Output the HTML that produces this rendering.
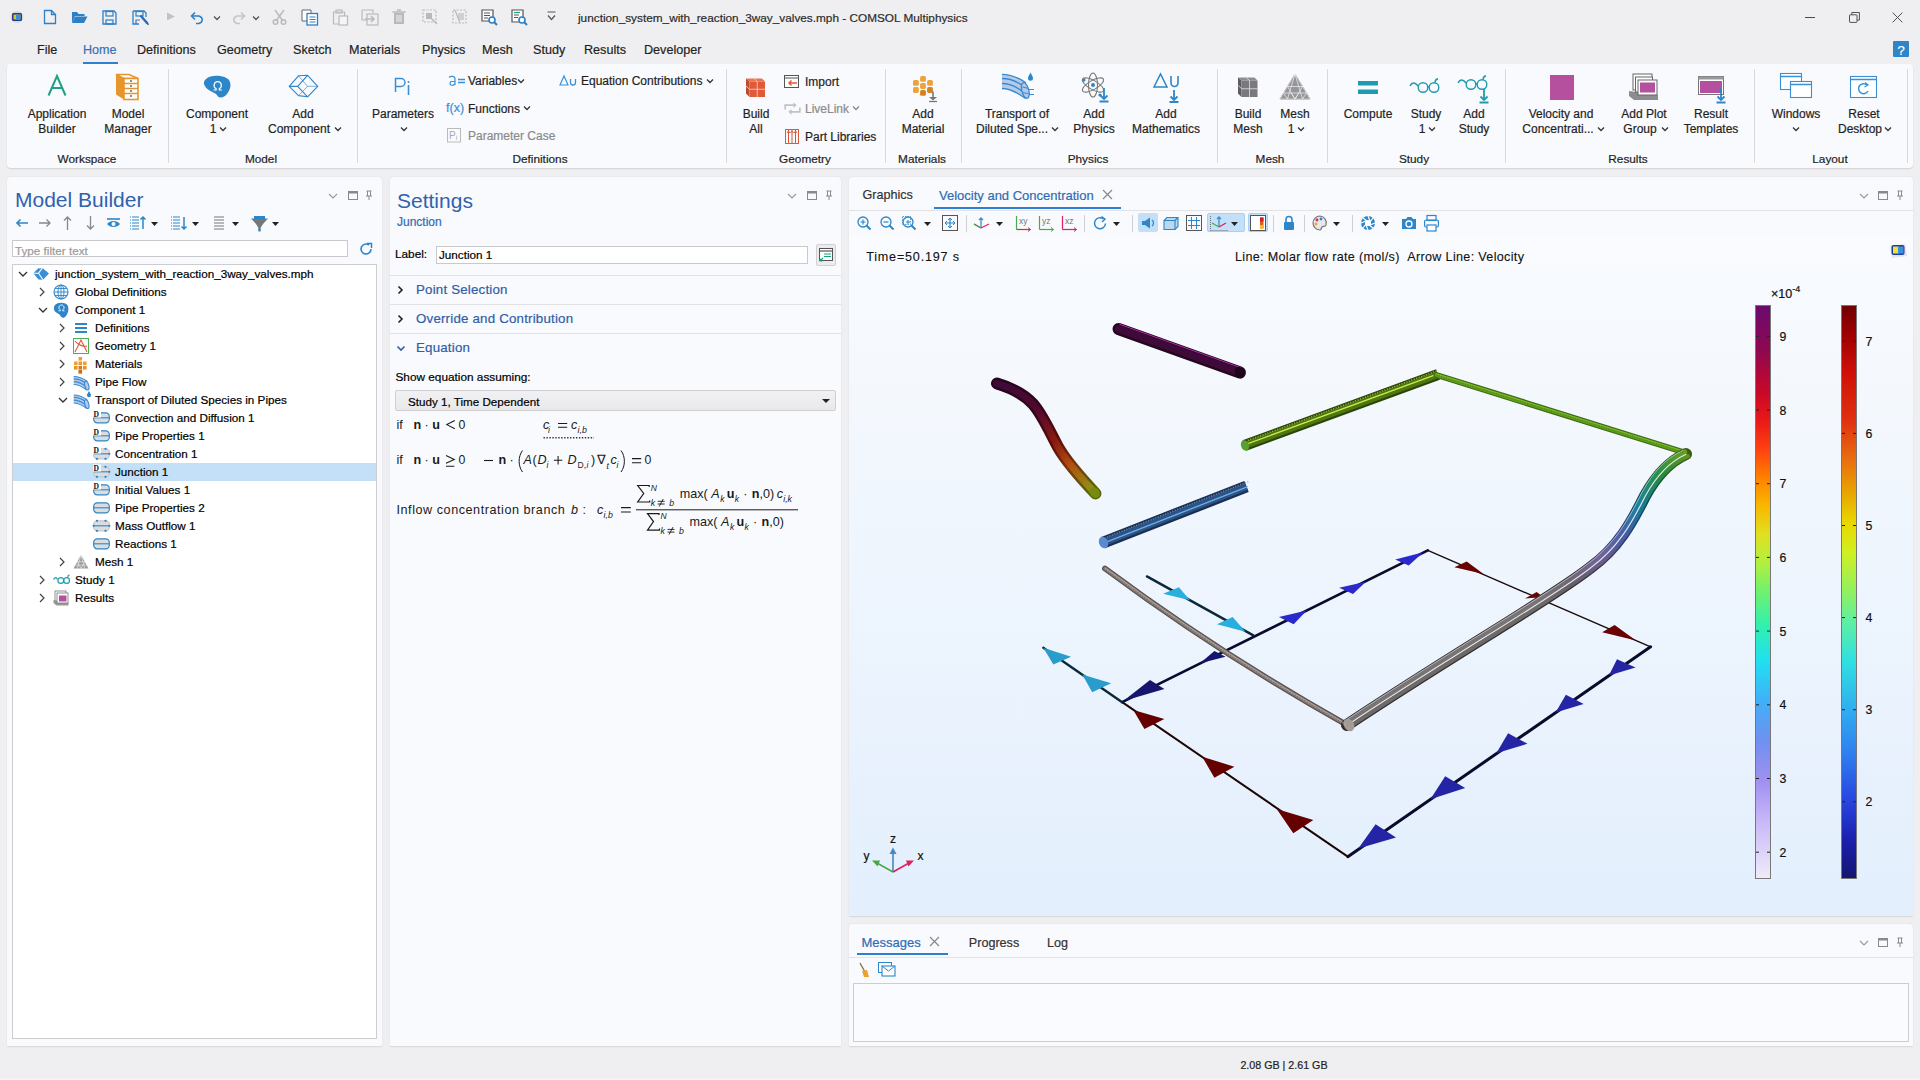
<!DOCTYPE html><html><head><meta charset="utf-8"><style>
html,body{margin:0;padding:0;width:1920px;height:1080px;overflow:hidden;background:#efeff1;font-family:"Liberation Sans", sans-serif;}
.t{position:absolute;white-space:nowrap;line-height:1;-webkit-text-stroke:0.2px currentColor;}
.r{position:absolute;}
svg.r{overflow:visible;}
</style></head><body>
<svg class="r" style="left:10px;top:10px" width="14" height="14" viewBox="0 0 14 14"><ellipse cx="7" cy="7" rx="6.5" ry="6" fill="#d9d9de"/><rect x="2" y="3" width="10" height="8" rx="1.5" fill="#1b3c8f"/><rect x="3.5" y="4.5" width="7" height="5" fill="#e8c21c"/><rect x="6" y="4.5" width="4.5" height="5" fill="#3b8fd9"/></svg><svg class="r" style="left:43px;top:9px" width="14" height="16" viewBox="0 0 14 16"><path d="M1.5 1.5h7l4 4v9h-11z M8.5 1.5v4h4" fill="none" stroke="#2d7fc6" stroke-width="1.3"/></svg><svg class="r" style="left:71px;top:10px" width="17" height="14" viewBox="0 0 17 14"><path d="M1 2h5l1.5 2h6v2H4l-3 7z" fill="#2d7fc6"/><path d="M4 6.5h12.5l-3.5 6.5H1z" fill="#2d7fc6"/></svg><svg class="r" style="left:102px;top:10px" width="15" height="15" viewBox="0 0 15 15"><path d="M1 1h11l2 2v11H1z" fill="none" stroke="#2d7fc6" stroke-width="1.3"/><rect x="4" y="1.5" width="7" height="4.5" fill="none" stroke="#2d7fc6" stroke-width="1.2"/><rect x="4" y="10" width="7" height="4" fill="none" stroke="#2d7fc6" stroke-width="1.2"/></svg><svg class="r" style="left:132px;top:10px" width="17" height="15" viewBox="0 0 17 15"><path d="M1 1h11l2 2v4 M1 1v13h6" fill="none" stroke="#2d7fc6" stroke-width="1.3"/><rect x="4" y="1.5" width="7" height="4.5" fill="none" stroke="#2d7fc6" stroke-width="1.2"/><path d="M4 14v-4h4" fill="none" stroke="#2d7fc6" stroke-width="1.2"/><path d="M8.5 5.5l7 8" stroke="#2a6db5" stroke-width="2.4"/><path d="M15 13l1.5 1.8" stroke="#555" stroke-width="1.5"/></svg><svg class="r" style="left:166px;top:12px" width="10" height="9" viewBox="0 0 10 9"><path d="M1 0.5l8 4-8 4z" fill="#c3c3c6"/></svg><svg class="r" style="left:190px;top:11px" width="16" height="13" viewBox="0 0 16 13"><path d="M5 1.5L1.5 5 5 8.5" fill="none" stroke="#2d7fc6" stroke-width="1.6"/><path d="M2 5h7a5 4 0 0 1 0 7.5H6" fill="none" stroke="#2d7fc6" stroke-width="1.5"/></svg><svg class="r" style="left:213px;top:15px" width="8" height="6" viewBox="0 0 8 6"><path d="M1 1.5l3 3 3-3" fill="none" stroke="#555" stroke-width="1.3"/></svg><svg class="r" style="left:230px;top:11px" width="16" height="13" viewBox="0 0 16 13"><path d="M11 1.5L14.5 5 11 8.5" fill="none" stroke="#c5c5c8" stroke-width="1.6"/><path d="M14 5H7a5 4 0 0 0 0 7.5h3" fill="none" stroke="#c5c5c8" stroke-width="1.5"/></svg><svg class="r" style="left:252px;top:15px" width="8" height="6" viewBox="0 0 8 6"><path d="M1 1.5l3 3 3-3" fill="none" stroke="#555" stroke-width="1.3"/></svg><svg class="r" style="left:272px;top:9px" width="15" height="16" viewBox="0 0 15 16"><path d="M3 1l8 11 M12 1L4 12" stroke="#b9b9bc" stroke-width="1.4" fill="none"/><circle cx="3.5" cy="13" r="2.3" fill="none" stroke="#b9b9bc" stroke-width="1.4"/><circle cx="11.5" cy="13" r="2.3" fill="none" stroke="#b9b9bc" stroke-width="1.4"/></svg><svg class="r" style="left:301px;top:9px" width="18" height="17" viewBox="0 0 18 17"><path d="M1 1h9v11H1z" fill="#fff" stroke="#666" stroke-width="1"/><rect x="6" y="4.5" width="10.5" height="11.5" fill="#fff" stroke="#2d7fc6" stroke-width="1.3"/><path d="M8.5 8h6 M8.5 10.5h6 M8.5 13h6" stroke="#2d7fc6" stroke-width="1.1"/></svg><svg class="r" style="left:332px;top:9px" width="17" height="17" viewBox="0 0 17 17"><path d="M1.5 3h11v12h-11z" fill="none" stroke="#b9b9bc" stroke-width="1.2"/><rect x="4" y="1" width="6" height="3" fill="none" stroke="#b9b9bc" stroke-width="1.2"/><rect x="7" y="7" width="8.5" height="9" fill="#f5f5f7" stroke="#b9b9bc" stroke-width="1.2"/></svg><svg class="r" style="left:361px;top:9px" width="18" height="17" viewBox="0 0 18 17"><path d="M1 1h11v3 M1 1v10h5" fill="none" stroke="#b9b9bc" stroke-width="1.2"/><rect x="6" y="5" width="11" height="11" fill="none" stroke="#b9b9bc" stroke-width="1.2"/><path d="M4 10h9 M10 7l3 3-3 3" fill="none" stroke="#b9b9bc" stroke-width="1.5"/></svg><svg class="r" style="left:392px;top:9px" width="14" height="16" viewBox="0 0 14 16"><path d="M0.5 3h13 M5 1h4" stroke="#b9b9bc" stroke-width="1.5"/><path d="M2 4h10v11H2z" fill="#b9b9bc"/><path d="M5 6v7 M7 6v7 M9 6v7" stroke="#efeff1" stroke-width="1"/></svg><svg class="r" style="left:422px;top:9px" width="17" height="16" viewBox="0 0 17 16"><rect x="1" y="1" width="13" height="12" fill="none" stroke="#b9b9bc" stroke-width="1.2" stroke-dasharray="2 1.5"/><rect x="4" y="4" width="6" height="6" fill="#b9b9bc"/><path d="M8 8l7 7" stroke="#b9b9bc" stroke-width="1.5"/></svg><svg class="r" style="left:452px;top:9px" width="16" height="16" viewBox="0 0 16 16"><rect x="1" y="1" width="13" height="13" fill="none" stroke="#b9b9bc" stroke-width="1.2" stroke-dasharray="2 1.5"/><path d="M3 1l5 13" stroke="#b9b9bc" stroke-width="1.2"/><rect x="6" y="4" width="6" height="7" fill="#b9b9bc" opacity="0.6"/></svg><svg class="r" style="left:481px;top:9px" width="17" height="17" viewBox="0 0 17 17"><path d="M1 1h11v11H1z" fill="#fff" stroke="#555" stroke-width="1.2"/><path d="M3 4h6 M3 6.5h6 M3 9h4" stroke="#555" stroke-width="1"/><circle cx="11" cy="11" r="3" fill="#fff" stroke="#2d7fc6" stroke-width="1.6"/><path d="M13 13l3 3" stroke="#2d7fc6" stroke-width="2"/></svg><svg class="r" style="left:511px;top:9px" width="17" height="17" viewBox="0 0 17 17"><path d="M1 1h11v12H1z" fill="#fff" stroke="#555" stroke-width="1.2"/><path d="M3 3.5h6" stroke="#1aa37a" stroke-width="1.2"/><path d="M3 6h5 M3 8.5h4" stroke="#555" stroke-width="1"/><circle cx="11" cy="11" r="3" fill="#fff" stroke="#2d7fc6" stroke-width="1.6"/><path d="M13 13l3 3" stroke="#2d7fc6" stroke-width="2"/></svg><svg class="r" style="left:547px;top:11px" width="9" height="10" viewBox="0 0 9 10"><path d="M0.5 1h8 M1 4.5l3.5 4 3.5-4" fill="none" stroke="#555" stroke-width="1.2"/></svg><div class="t" style="left:578px;top:12.51px;font-size:11.8px;color:#2b2b2b;font-weight:normal;">junction_system_with_reaction_3way_valves.mph - COMSOL Multiphysics</div><div class="r" style="left:1805px;top:17px;width:10px;height:1px;background:#4a4a4a"></div><svg class="r" style="left:1849px;top:12px" width="11" height="11" viewBox="0 0 11 11"><rect x="0.5" y="2.8" width="7.5" height="7.6" rx="0.6" fill="none" stroke="#4a4a4a" stroke-width="0.95"/><path d="M2.8 2.8V0.5h7.6v7.6H8" fill="none" stroke="#4a4a4a" stroke-width="0.95"/></svg><svg class="r" style="left:1892px;top:12px" width="11" height="11" viewBox="0 0 11 11"><path d="M0.6 0.6l9.8 9.8 M10.4 0.6L0.6 10.4" stroke="#4a4a4a" stroke-width="0.95"/></svg><div class="t" style="left:37px;top:44.13px;font-size:12.6px;color:#1f1f1f;font-weight:normal;">File</div><div class="t" style="left:83px;top:44.13px;font-size:12.6px;color:#3a6fb5;font-weight:normal;">Home</div><div class="t" style="left:137px;top:44.13px;font-size:12.6px;color:#1f1f1f;font-weight:normal;">Definitions</div><div class="t" style="left:217px;top:44.13px;font-size:12.6px;color:#1f1f1f;font-weight:normal;">Geometry</div><div class="t" style="left:293px;top:44.13px;font-size:12.6px;color:#1f1f1f;font-weight:normal;">Sketch</div><div class="t" style="left:349px;top:44.13px;font-size:12.6px;color:#1f1f1f;font-weight:normal;">Materials</div><div class="t" style="left:422px;top:44.13px;font-size:12.6px;color:#1f1f1f;font-weight:normal;">Physics</div><div class="t" style="left:482px;top:44.13px;font-size:12.6px;color:#1f1f1f;font-weight:normal;">Mesh</div><div class="t" style="left:533px;top:44.13px;font-size:12.6px;color:#1f1f1f;font-weight:normal;">Study</div><div class="t" style="left:584px;top:44.13px;font-size:12.6px;color:#1f1f1f;font-weight:normal;">Results</div><div class="t" style="left:644px;top:44.13px;font-size:12.6px;color:#1f1f1f;font-weight:normal;">Developer</div><div class="r" style="left:83px;top:62px;width:35px;height:2px;background:#2f7fd0"></div><div class="r" style="left:1893px;top:41px;width:16px;height:16px;background:#2e86c8;border-radius:1px"></div><div class="t" style="left:1401px;width:1000px;text-align:center;top:43.80px;font-size:13px;color:#fff;font-weight:normal;">?</div><div class="r" style="left:7px;top:64px;width:1906px;height:104px;background:#f9fafd;border-radius:4px;box-shadow:0 1px 1.5px rgba(0,0,0,0.12)"></div><div class="r" style="left:168px;top:69px;width:1px;height:94px;background:#d9d9dc"></div><div class="r" style="left:357px;top:69px;width:1px;height:94px;background:#d9d9dc"></div><div class="r" style="left:726px;top:69px;width:1px;height:94px;background:#d9d9dc"></div><div class="r" style="left:885px;top:69px;width:1px;height:94px;background:#d9d9dc"></div><div class="r" style="left:961px;top:69px;width:1px;height:94px;background:#d9d9dc"></div><div class="r" style="left:1217px;top:69px;width:1px;height:94px;background:#d9d9dc"></div><div class="r" style="left:1327px;top:69px;width:1px;height:94px;background:#d9d9dc"></div><div class="r" style="left:1505px;top:69px;width:1px;height:94px;background:#d9d9dc"></div><div class="r" style="left:1754px;top:69px;width:1px;height:94px;background:#d9d9dc"></div><div class="r" style="left:1907px;top:69px;width:1px;height:94px;background:#d9d9dc"></div><div class="t" style="left:-413px;width:1000px;text-align:center;top:154.41px;font-size:11.8px;color:#1f1f1f;font-weight:normal;">Workspace</div><div class="t" style="left:-239px;width:1000px;text-align:center;top:154.41px;font-size:11.8px;color:#1f1f1f;font-weight:normal;">Model</div><div class="t" style="left:40px;width:1000px;text-align:center;top:154.41px;font-size:11.8px;color:#1f1f1f;font-weight:normal;">Definitions</div><div class="t" style="left:305px;width:1000px;text-align:center;top:154.41px;font-size:11.8px;color:#1f1f1f;font-weight:normal;">Geometry</div><div class="t" style="left:422px;width:1000px;text-align:center;top:154.41px;font-size:11.8px;color:#1f1f1f;font-weight:normal;">Materials</div><div class="t" style="left:588px;width:1000px;text-align:center;top:154.41px;font-size:11.8px;color:#1f1f1f;font-weight:normal;">Physics</div><div class="t" style="left:770px;width:1000px;text-align:center;top:154.41px;font-size:11.8px;color:#1f1f1f;font-weight:normal;">Mesh</div><div class="t" style="left:914px;width:1000px;text-align:center;top:154.41px;font-size:11.8px;color:#1f1f1f;font-weight:normal;">Study</div><div class="t" style="left:1128px;width:1000px;text-align:center;top:154.41px;font-size:11.8px;color:#1f1f1f;font-weight:normal;">Results</div><div class="t" style="left:1330px;width:1000px;text-align:center;top:154.41px;font-size:11.8px;color:#1f1f1f;font-weight:normal;">Layout</div><svg class="r" style="left:47px;top:75px" width="20" height="21" viewBox="0 0 20 21"><path d="M1.5 20.5L10 1 18.5 20.5 M5 13h10" fill="none" stroke="#1ea084" stroke-width="2"/></svg><div class="t" style="left:-443px;width:1000px;text-align:center;top:108.44px;font-size:12.0px;color:#1f1f1f;font-weight:normal;">Application</div><div class="t" style="left:-443px;width:1000px;text-align:center;top:123.34px;font-size:12.0px;color:#1f1f1f;font-weight:normal;">Builder</div><svg class="r" style="left:115px;top:73px" width="24" height="27" viewBox="0 0 24 27"><path d="M1 1.5l8 4v21l-8-5z" fill="#e8962b"/><path d="M1 1.5h13l9 4H9z" fill="#fff" stroke="#e8962b" stroke-width="1.5"/><rect x="9" y="5.5" width="14" height="21" fill="#fff" stroke="#e8962b" stroke-width="1.6"/><path d="M9 10.5h14 M9 15.5h14 M9 20.5h14" stroke="#e8962b" stroke-width="1.4"/><circle cx="16" cy="8" r="0.9" fill="#555"/><circle cx="16" cy="13" r="0.9" fill="#555"/><circle cx="16" cy="18" r="0.9" fill="#555"/><circle cx="16" cy="23" r="0.9" fill="#555"/></svg><div class="t" style="left:-372px;width:1000px;text-align:center;top:108.44px;font-size:12.0px;color:#1f1f1f;font-weight:normal;">Model</div><div class="t" style="left:-372px;width:1000px;text-align:center;top:123.34px;font-size:12.0px;color:#1f1f1f;font-weight:normal;">Manager</div><svg class="r" style="left:203px;top:75px" width="28" height="24" viewBox="0 0 28 24"><path d="M3 4C8-1 22 0 26 5c3 5 1 10-2 14-3 4-8 5-10 1C12 17 4 16 2 11 0 8 1 6 3 4z" fill="#2d86c9"/><path d="M10.5 15h2.6v-1.4c-1.7-.8-2.3-2.6-1.9-4.2.5-1.8 2-2.7 3.5-2.7s3 .9 3.5 2.7c.4 1.6-.2 3.4-1.9 4.2V15h2.6" fill="none" stroke="#fff" stroke-width="1.2"/></svg><div class="t" style="left:-283px;width:1000px;text-align:center;top:108.44px;font-size:12.0px;color:#1f1f1f;font-weight:normal;">Component</div><div class="t" style="left:-287px;width:1000px;text-align:center;top:123.34px;font-size:12.0px;color:#1f1f1f;font-weight:normal;">1</div><svg class="r" style="left:219px;top:126px" width="8" height="6" viewBox="0 0 8 6"><path d="M1 1.5l3 3 3-3" fill="none" stroke="#333" stroke-width="1.3"/></svg><svg class="r" style="left:288px;top:74px" width="31" height="24" viewBox="0 0 31 24"><path d="M1.2 12.4L10.5 1.8L19.6 1.3L29.7 12.3L19.6 22.8L10.5 21.6z M1.2 12.4H9.7L19.6 1.3 M9.7 12.4L19.6 22.8" fill="none" stroke="#2f86c9" stroke-width="1.15" stroke-linejoin="round"/><path d="M10.5 1.8L19.6 12.3H29.7 M19.6 12.3L10.5 21.6" fill="none" stroke="#2f86c9" stroke-width="0.8" opacity="0.8"/></svg><div class="t" style="left:-197px;width:1000px;text-align:center;top:108.44px;font-size:12.0px;color:#1f1f1f;font-weight:normal;">Add</div><div class="t" style="left:-201px;width:1000px;text-align:center;top:123.34px;font-size:12.0px;color:#1f1f1f;font-weight:normal;">Component</div><svg class="r" style="left:334px;top:126px" width="8" height="6" viewBox="0 0 8 6"><path d="M1 1.5l3 3 3-3" fill="none" stroke="#333" stroke-width="1.3"/></svg><svg class="r" style="left:394px;top:77px" width="18" height="19" viewBox="0 0 18 19"><path d="M1.5 15V1.5h5.5a4 4 0 0 1 0 8H1.5" fill="none" stroke="#3b8fd6" stroke-width="1.5"/><path d="M14.5 8v10" stroke="#3b8fd6" stroke-width="1.6"/><circle cx="14.5" cy="5" r="1" fill="#3b8fd6"/></svg><div class="t" style="left:-97px;width:1000px;text-align:center;top:108.44px;font-size:12.0px;color:#1f1f1f;font-weight:normal;">Parameters</div><svg class="r" style="left:400px;top:126px" width="8" height="6" viewBox="0 0 8 6"><path d="M1 1.5l3 3 3-3" fill="none" stroke="#333" stroke-width="1.3"/></svg><svg class="r" style="left:447px;top:75px" width="19" height="11" viewBox="0 0 19 11"><path d="M2 2.5c1-1.5 6-2 6 1.5V10 M8 6.5H4a2.2 2.2 0 0 0 0 3.6c2 .6 4-.6 4-2" fill="none" stroke="#3b8fd6" stroke-width="1.2"/><path d="M11 4.5h7 M11 7.5h7" stroke="#3b8fd6" stroke-width="1.3"/></svg><div class="t" style="left:468px;top:75.44px;font-size:12.0px;color:#1f1f1f;font-weight:normal;">Variables</div><svg class="r" style="left:517px;top:78px" width="8" height="6" viewBox="0 0 8 6"><path d="M1 1.5l3 3 3-3" fill="none" stroke="#333" stroke-width="1.3"/></svg><div class="t" style="left:446px;top:102.22px;font-size:12.5px;color:#3b8fd6;font-weight:normal;">f(x)</div><div class="t" style="left:468px;top:102.64px;font-size:12.0px;color:#1f1f1f;font-weight:normal;">Functions</div><svg class="r" style="left:523px;top:105px" width="8" height="6" viewBox="0 0 8 6"><path d="M1 1.5l3 3 3-3" fill="none" stroke="#333" stroke-width="1.3"/></svg><svg class="r" style="left:447px;top:128px" width="14" height="15" viewBox="0 0 14 15"><rect x="0.5" y="0.5" width="13" height="13.5" fill="none" stroke="#bbb"/><text x="2" y="11" font-size="10" fill="#aaa" font-family="Liberation Sans">Pᵢ</text></svg><div class="t" style="left:468px;top:130.44px;font-size:12.0px;color:#8a8a8a;font-weight:normal;">Parameter Case</div><svg class="r" style="left:559px;top:75px" width="19" height="11" viewBox="0 0 19 11"><path d="M1 10L5 1l4 9z" fill="none" stroke="#3b8fd6" stroke-width="1.2"/><path d="M11.5 4v3.5a2.5 2.5 0 0 0 5 0V4" fill="none" stroke="#3b8fd6" stroke-width="1.3"/></svg><div class="t" style="left:581px;top:75.44px;font-size:12.0px;color:#1f1f1f;font-weight:normal;">Equation Contributions</div><svg class="r" style="left:706px;top:78px" width="8" height="6" viewBox="0 0 8 6"><path d="M1 1.5l3 3 3-3" fill="none" stroke="#333" stroke-width="1.3"/></svg><svg class="r" style="left:746px;top:78px" width="20" height="20" viewBox="0 0 20 20"><path d="M0 0.5H16L19 3.5H3.5z" fill="#e9734f"/><path d="M0 0.5L3.5 3.5V19L0 15.5z" fill="#c24a2c"/><rect x="3.5" y="3.5" width="15.5" height="15.5" fill="#e05a3a"/><path d="M11.25 3.5V19 M3.5 11.25H19 M8 0.5l3.2 3 M0 8l3.5 3.2" stroke="#f6c9b8" stroke-width="0.9"/></svg><div class="t" style="left:256px;width:1000px;text-align:center;top:108.44px;font-size:12.0px;color:#1f1f1f;font-weight:normal;">Build</div><div class="t" style="left:256px;width:1000px;text-align:center;top:123.34px;font-size:12.0px;color:#1f1f1f;font-weight:normal;">All</div><svg class="r" style="left:784px;top:75px" width="15" height="13" viewBox="0 0 15 13"><rect x="0.5" y="0.5" width="14" height="12" fill="#fff" stroke="#555" stroke-width="1"/><path d="M0.5 3h14" stroke="#555"/><path d="M13 8H5 M7.5 5.5L5 8l2.5 2.5" fill="none" stroke="#e05a3a" stroke-width="1.5"/></svg><div class="t" style="left:805px;top:75.64px;font-size:12.0px;color:#1f1f1f;font-weight:normal;">Import</div><svg class="r" style="left:784px;top:102px" width="17" height="13" viewBox="0 0 17 13"><path d="M1.2 7.5V3.2h9.5 M15.8 5.5v4.3H6.3" fill="none" stroke="#c2c2c5" stroke-width="1.7"/><path d="M9.5 0.3l3.2 2.9-3.2 2.9z M7.5 6.9L4.3 9.8l3.2 2.9z" fill="#c2c2c5"/></svg><div class="t" style="left:805px;top:102.64px;font-size:12.0px;color:#8a8a8a;font-weight:normal;">LiveLink</div><svg class="r" style="left:852px;top:105px" width="8" height="6" viewBox="0 0 8 6"><path d="M1 1.5l3 3 3-3" fill="none" stroke="#888" stroke-width="1.3"/></svg><svg class="r" style="left:785px;top:129px" width="14" height="15" viewBox="0 0 14 15"><rect x="0.5" y="0.5" width="13" height="14" fill="none" stroke="#e05a3a" stroke-width="1"/><path d="M3.5 1v13 M7 1v13 M10.5 1v13 M2 4l1.5-2 1.5 2 M5.5 4l1.5-2 1.5 2 M9 4l1.5-2 1.5 2" fill="none" stroke="#e05a3a" stroke-width="1"/></svg><div class="t" style="left:805px;top:130.64px;font-size:12.0px;color:#1f1f1f;font-weight:normal;">Part Libraries</div><svg class="r" style="left:912px;top:75px" width="27" height="28" viewBox="0 0 27 28"><rect x="8.1" y="1" width="5.8" height="5.8" rx="1.6" fill="#eea23a"/><rect x="1" y="5" width="5.8" height="5.8" rx="1.6" fill="#eea23a"/><rect x="15.1" y="5" width="5.8" height="5.8" rx="1.6" fill="#eea23a"/><rect x="8.1" y="8.1" width="5.8" height="5.8" rx="1.6" fill="#eea23a"/><rect x="1" y="12.1" width="5.8" height="5.8" rx="1.6" fill="#eea23a"/><rect x="15.1" y="12.1" width="5.8" height="5.8" rx="1.6" fill="#d88020"/><rect x="8.1" y="15" width="5.8" height="5.8" rx="1.6" fill="#d88020"/><path d="M21 16.5v6.5" stroke="#77777a" stroke-width="1.6"/><path d="M17 22h8l-4 3.5z" fill="#77777a"/><path d="M17 26.5h8" stroke="#77777a" stroke-width="1.3"/></svg><div class="t" style="left:423px;width:1000px;text-align:center;top:108.44px;font-size:12.0px;color:#1f1f1f;font-weight:normal;">Add</div><div class="t" style="left:423px;width:1000px;text-align:center;top:123.34px;font-size:12.0px;color:#1f1f1f;font-weight:normal;">Material</div><svg class="r" style="left:998px;top:68px" width="40" height="34" viewBox="0 0 40 34"><path d="M4 6.3C13 6.3 21 10 28 14.8L27.5 30.5C20 25 12 20.5 4 20.5z" fill="#b3cbe9"/><path d="M4 6.3C13 6.3 21 10 28 14.8 M4 10.5C13 10.5 20 14 26 18.5 M4 15.5C12 15.5 19 19 25 24 M4 20.5C12 20.5 20 25 27.5 30.5" fill="none" stroke="#3a88d0" stroke-width="1.3"/><ellipse cx="27.3" cy="22.5" rx="3.5" ry="8" transform="rotate(-15 27.3 22.5)" fill="#b3cbe9" stroke="#3a88d0" stroke-width="1.3"/><path d="M24.5 19l6 1.5 M24.5 24.5l6 1.2" stroke="#3a88d0" stroke-width="1.1"/><path d="M31 21.5h5 M31 26.5h5" stroke="#3a88d0" stroke-width="1.2"/><path d="M32.5 4.5c-1.2 2.5-2.5 4-2.5 5.8a2.5 2.5 0 0 0 5 0c0-1.8-1.3-3.3-2.5-5.8z" fill="#2d86c9"/></svg><div class="t" style="left:517px;width:1000px;text-align:center;top:108.44px;font-size:12.0px;color:#1f1f1f;font-weight:normal;">Transport of</div><div class="t" style="left:512px;width:1000px;text-align:center;top:123.34px;font-size:12.0px;color:#1f1f1f;font-weight:normal;">Diluted Spe...</div><svg class="r" style="left:1051px;top:126px" width="8" height="6" viewBox="0 0 8 6"><path d="M1 1.5l3 3 3-3" fill="none" stroke="#333" stroke-width="1.3"/></svg><svg class="r" style="left:1080px;top:71px" width="31" height="32" viewBox="0 0 31 32"><ellipse cx="13" cy="14" rx="12" ry="4.5" fill="none" stroke="#777" stroke-width="1.1" transform="rotate(30 13 14)"/><ellipse cx="13" cy="14" rx="12" ry="4.5" fill="none" stroke="#777" stroke-width="1.1" transform="rotate(-30 13 14)"/><ellipse cx="13" cy="14" rx="4.5" ry="12" fill="none" stroke="#777" stroke-width="1.1"/><circle cx="13" cy="14" r="2" fill="#2d86c9"/><circle cx="4" cy="9" r="1.6" fill="#2d86c9"/><circle cx="20" cy="24" r="1.6" fill="#2d86c9"/><path d="M24 17v11 M20.5 24.5l3.5 3.5 3.5-3.5 M19.5 30.5h9" fill="none" stroke="#2d86c9" stroke-width="1.8"/></svg><div class="t" style="left:594px;width:1000px;text-align:center;top:108.44px;font-size:12.0px;color:#1f1f1f;font-weight:normal;">Add</div><div class="t" style="left:594px;width:1000px;text-align:center;top:123.34px;font-size:12.0px;color:#1f1f1f;font-weight:normal;">Physics</div><svg class="r" style="left:1153px;top:73px" width="30" height="30" viewBox="0 0 30 30"><path d="M1 14L7.5 1 14 14z" fill="none" stroke="#2d86c9" stroke-width="1.5"/><path d="M18 3v7a3.5 3.5 0 0 0 7 0V3" fill="none" stroke="#2d86c9" stroke-width="1.6"/><path d="M21 17v10 M17.5 23.5l3.5 3.5 3.5-3.5 M16.5 29h9" fill="none" stroke="#2d86c9" stroke-width="1.8"/></svg><div class="t" style="left:666px;width:1000px;text-align:center;top:108.44px;font-size:12.0px;color:#1f1f1f;font-weight:normal;">Add</div><div class="t" style="left:666px;width:1000px;text-align:center;top:123.34px;font-size:12.0px;color:#1f1f1f;font-weight:normal;">Mathematics</div><svg class="r" style="left:1238px;top:77px" width="21" height="21" viewBox="0 0 21 21"><path d="M0 0.5H16.5L19.5 3.5H3.5z" fill="#8e8e92"/><path d="M0 0.5L3.5 3.5V20L0 16.5z" fill="#5e5e62"/><rect x="3.5" y="3.5" width="16" height="16.5" fill="#7a7a7e"/><path d="M11.5 3.5V20 M3.5 11.75H19.5 M8.2 0.5l3.3 3 M0 8.2l3.5 3.5" stroke="#d6d6d9" stroke-width="0.9"/></svg><div class="t" style="left:748px;width:1000px;text-align:center;top:108.44px;font-size:12.0px;color:#1f1f1f;font-weight:normal;">Build</div><div class="t" style="left:748px;width:1000px;text-align:center;top:123.34px;font-size:12.0px;color:#1f1f1f;font-weight:normal;">Mesh</div><svg class="r" style="left:1279px;top:73px" width="32" height="27" viewBox="0 0 32 27"><path d="M16 1L31 26H1z" fill="#95959a" stroke="#7a7a7e" stroke-width="1"/><path d="M16 1L31 26H1z M8.5 13.5h15 M4.5 20h23 M16 1l-7.5 25 M16 1l7.5 25 M8.5 13.5L16 26l7.5-12.5 M4.5 20L8.5 26 M27.5 20L23.5 26 M12 20l4 6 4-6" fill="none" stroke="#e8e8ea" stroke-width="0.8"/></svg><div class="t" style="left:795px;width:1000px;text-align:center;top:108.44px;font-size:12.0px;color:#1f1f1f;font-weight:normal;">Mesh</div><div class="t" style="left:791px;width:1000px;text-align:center;top:123.34px;font-size:12.0px;color:#1f1f1f;font-weight:normal;">1</div><svg class="r" style="left:1297px;top:126px" width="8" height="6" viewBox="0 0 8 6"><path d="M1 1.5l3 3 3-3" fill="none" stroke="#333" stroke-width="1.3"/></svg><svg class="r" style="left:1358px;top:81px" width="20" height="14" viewBox="0 0 20 14"><rect x="0" y="0" width="20" height="4.5" fill="#1f9bb0"/><rect x="0" y="8.5" width="20" height="4.5" fill="#1f9bb0"/></svg><div class="t" style="left:868px;width:1000px;text-align:center;top:108.44px;font-size:12.0px;color:#1f1f1f;font-weight:normal;">Compute</div><svg class="r" style="left:1409px;top:77px" width="32" height="17" viewBox="0 0 32 17"><path d="M1 9c2-4 5-4 8 0" fill="none" stroke="#1f9bb0" stroke-width="1.4"/><circle cx="14" cy="10.5" r="4.8" fill="none" stroke="#1f9bb0" stroke-width="1.4"/><circle cx="25" cy="10.5" r="4.8" fill="none" stroke="#1f9bb0" stroke-width="1.4"/><path d="M18.8 10h1.4 M26 5.8c0-2 1-3.5 3-4" fill="none" stroke="#1f9bb0" stroke-width="1.4"/></svg><div class="t" style="left:926px;width:1000px;text-align:center;top:108.44px;font-size:12.0px;color:#1f1f1f;font-weight:normal;">Study</div><div class="t" style="left:922px;width:1000px;text-align:center;top:123.34px;font-size:12.0px;color:#1f1f1f;font-weight:normal;">1</div><svg class="r" style="left:1428px;top:126px" width="8" height="6" viewBox="0 0 8 6"><path d="M1 1.5l3 3 3-3" fill="none" stroke="#333" stroke-width="1.3"/></svg><svg class="r" style="left:1457px;top:74px" width="32" height="30" viewBox="0 0 32 30"><path d="M1 9c2-4 5-4 8 0" fill="none" stroke="#1f9bb0" stroke-width="1.4"/><circle cx="14" cy="10.5" r="4.8" fill="none" stroke="#1f9bb0" stroke-width="1.4"/><circle cx="25" cy="10.5" r="4.8" fill="none" stroke="#1f9bb0" stroke-width="1.4"/><path d="M18.8 10h1.4 M26 5.8c0-2 1-3.5 3-4" fill="none" stroke="#1f9bb0" stroke-width="1.4"/><path d="M27 15v11 M23.5 22.5l3.5 3.5 3.5-3.5 M22.5 28.5h9" fill="none" stroke="#1f9bb0" stroke-width="1.8"/></svg><div class="t" style="left:974px;width:1000px;text-align:center;top:108.44px;font-size:12.0px;color:#1f1f1f;font-weight:normal;">Add</div><div class="t" style="left:974px;width:1000px;text-align:center;top:123.34px;font-size:12.0px;color:#1f1f1f;font-weight:normal;">Study</div><div class="r" style="left:1550px;top:75px;width:24px;height:25px;background:#b5509f"></div><div class="t" style="left:1061px;width:1000px;text-align:center;top:108.44px;font-size:12.0px;color:#1f1f1f;font-weight:normal;">Velocity and</div><div class="t" style="left:1058px;width:1000px;text-align:center;top:123.34px;font-size:12.0px;color:#1f1f1f;font-weight:normal;">Concentrati...</div><svg class="r" style="left:1597px;top:126px" width="8" height="6" viewBox="0 0 8 6"><path d="M1 1.5l3 3 3-3" fill="none" stroke="#333" stroke-width="1.3"/></svg><svg class="r" style="left:1628px;top:73px" width="31" height="28" viewBox="0 0 31 28"><path d="M1 18v5l5 4h24v-5" fill="#8c8c8f"/><rect x="5" y="1" width="19" height="16" fill="#fff" stroke="#666" stroke-width="1"/><rect x="7.5" y="4" width="17" height="15" fill="#fff" stroke="#666" stroke-width="1"/><rect x="10" y="7" width="19" height="15" fill="#fff" stroke="#666" stroke-width="1"/><rect x="12" y="9.5" width="15" height="10" fill="#b5509f"/></svg><div class="t" style="left:1144px;width:1000px;text-align:center;top:108.44px;font-size:12.0px;color:#1f1f1f;font-weight:normal;">Add Plot</div><div class="t" style="left:1140px;width:1000px;text-align:center;top:123.34px;font-size:12.0px;color:#1f1f1f;font-weight:normal;">Group</div><svg class="r" style="left:1661px;top:126px" width="8" height="6" viewBox="0 0 8 6"><path d="M1 1.5l3 3 3-3" fill="none" stroke="#333" stroke-width="1.3"/></svg><svg class="r" style="left:1698px;top:76px" width="31" height="28" viewBox="0 0 31 28"><rect x="0.5" y="0.5" width="25" height="18" fill="#fff" stroke="#777" stroke-width="1"/><rect x="0.5" y="0.5" width="25" height="3" fill="#999"/><rect x="2" y="5" width="22" height="12" fill="#b5509f"/><path d="M23 12v12 M19.5 20.5l3.5 3.5 3.5-3.5 M18.5 26.5h9" fill="none" stroke="#2d86c9" stroke-width="1.8"/></svg><div class="t" style="left:1211px;width:1000px;text-align:center;top:108.44px;font-size:12.0px;color:#1f1f1f;font-weight:normal;">Result</div><div class="t" style="left:1211px;width:1000px;text-align:center;top:123.34px;font-size:12.0px;color:#1f1f1f;font-weight:normal;">Templates</div><svg class="r" style="left:1780px;top:73px" width="33" height="26" viewBox="0 0 33 26"><rect x="0.5" y="0.5" width="21" height="16" fill="#fff" stroke="#3b8fd6" stroke-width="1.1"/><path d="M0.5 3.5h21" stroke="#3b8fd6" stroke-width="1.5"/><rect x="10.5" y="8.5" width="21" height="16" fill="#fff" stroke="#3b8fd6" stroke-width="1.1"/><path d="M10.5 11.5h21" stroke="#3b8fd6" stroke-width="1.5"/></svg><div class="t" style="left:1296px;width:1000px;text-align:center;top:108.44px;font-size:12.0px;color:#1f1f1f;font-weight:normal;">Windows</div><svg class="r" style="left:1792px;top:126px" width="8" height="6" viewBox="0 0 8 6"><path d="M1 1.5l3 3 3-3" fill="none" stroke="#333" stroke-width="1.3"/></svg><svg class="r" style="left:1850px;top:76px" width="28" height="23" viewBox="0 0 28 23"><rect x="0.5" y="0.5" width="26" height="21" fill="#fff" stroke="#3b8fd6" stroke-width="1.1"/><path d="M0.5 3.5h26" stroke="#3b8fd6" stroke-width="1.5"/><path d="M17 9a5 5 0 1 0 1 6" fill="none" stroke="#3b8fd6" stroke-width="1.5"/><path d="M15 6.5l3 2.5-3.5 2" fill="none" stroke="#3b8fd6" stroke-width="1.3"/></svg><div class="t" style="left:1364px;width:1000px;text-align:center;top:108.44px;font-size:12.0px;color:#1f1f1f;font-weight:normal;">Reset</div><div class="t" style="left:1360px;width:1000px;text-align:center;top:123.34px;font-size:12.0px;color:#1f1f1f;font-weight:normal;">Desktop</div><svg class="r" style="left:1884px;top:126px" width="8" height="6" viewBox="0 0 8 6"><path d="M1 1.5l3 3 3-3" fill="none" stroke="#333" stroke-width="1.3"/></svg><div class="r" style="left:7px;top:177px;width:375px;height:869px;background:#f9fafd;border-radius:4px 4px 1px 1px;box-shadow:0 0.5px 1.5px rgba(0,0,0,0.10)"></div><div class="r" style="left:390px;top:177px;width:451px;height:869px;background:#f9fafd;border-radius:4px 4px 1px 1px;box-shadow:0 0.5px 1.5px rgba(0,0,0,0.10)"></div><div class="r" style="left:849px;top:177px;width:1064px;height:739px;background:#f9fafd;border-radius:4px 4px 1px 1px;box-shadow:0 0.5px 1.5px rgba(0,0,0,0.10)"></div><div class="r" style="left:849px;top:924px;width:1064px;height:122px;background:#f9fafd;border-radius:4px 4px 1px 1px;box-shadow:0 0.5px 1.5px rgba(0,0,0,0.10)"></div><div class="t" style="left:15px;top:189.02px;font-size:21px;color:#3062ad;font-weight:normal;-webkit-text-stroke:0">Model Builder</div><svg class="r" style="left:328px;top:193px" width="10" height="6" viewBox="0 0 10 6"><path d="M1 1l4 4 4-4" fill="none" stroke="#999" stroke-width="1.1"/></svg><svg class="r" style="left:348px;top:191px" width="10" height="9" viewBox="0 0 10 9"><rect x="0.5" y="0.5" width="9" height="8" fill="none" stroke="#8a8a8a" stroke-width="1"/><rect x="0.5" y="0.5" width="9" height="2" fill="#8a8a8a"/></svg><svg class="r" style="left:365px;top:190px" width="8" height="10" viewBox="0 0 8 10"><path d="M1.5 1h5 M2.5 1v5 M5.5 1v5 M1 6h6 M4 6v4" fill="none" stroke="#8a8a8a" stroke-width="1"/></svg><svg class="r" style="left:15px;top:218px" width="14" height="10" viewBox="0 0 14 10"><path d="M13 5H2 M5.5 1.5L2 5l3.5 3.5" fill="none" stroke="#2d86c9" stroke-width="1.6"/></svg><svg class="r" style="left:38px;top:218px" width="14" height="10" viewBox="0 0 14 10"><path d="M1 5h11 M8.5 1.5L12 5 8.5 8.5" fill="none" stroke="#888" stroke-width="1.3"/></svg><svg class="r" style="left:63px;top:215px" width="9" height="16" viewBox="0 0 9 16"><path d="M4.5 15V2 M1 5.5l3.5-3.5 3.5 3.5" fill="none" stroke="#888" stroke-width="1.3"/></svg><svg class="r" style="left:86px;top:215px" width="9" height="16" viewBox="0 0 9 16"><path d="M4.5 1v13 M1 10.5l3.5 3.5 3.5-3.5" fill="none" stroke="#888" stroke-width="1.3"/></svg><svg class="r" style="left:106px;top:217px" width="15" height="12" viewBox="0 0 15 12"><path d="M1 2h13" stroke="#2d86c9" stroke-width="1.6"/><path d="M1 7c3-4 10-4 13 0-3 4-10 4-13 0z" fill="#2d86c9"/><circle cx="7.5" cy="7" r="2" fill="#fff"/></svg><svg class="r" style="left:129px;top:215px" width="18" height="16" viewBox="0 0 18 16"><path d="M1 2h9 M1 5h9 M1 8h9 M1 11h9 M1 14h9" stroke="#2d86c9" stroke-width="1.1" stroke-dasharray="1 1 8 0"/><path d="M14 14V2 M11.5 4.5L14 2l2.5 2.5" fill="none" stroke="#2d86c9" stroke-width="1.5"/></svg><svg class="r" style="left:151px;top:222px" width="7" height="4" viewBox="0 0 7 4"><path d="M0 0h7l-3.5 4z" fill="#222"/></svg><svg class="r" style="left:170px;top:215px" width="18" height="16" viewBox="0 0 18 16"><path d="M1 2h9 M1 5h9 M1 8h9 M1 11h9 M1 14h9" stroke="#2d86c9" stroke-width="1.1" stroke-dasharray="1 1 8 0"/><path d="M14 2v12 M11.5 11.5L14 14l2.5-2.5" fill="none" stroke="#2d86c9" stroke-width="1.5"/></svg><svg class="r" style="left:192px;top:222px" width="7" height="4" viewBox="0 0 7 4"><path d="M0 0h7l-3.5 4z" fill="#222"/></svg><svg class="r" style="left:213px;top:215px" width="12" height="16" viewBox="0 0 12 16"><path d="M1 2h10 M1 5h10 M1 8h10 M1 11h10 M1 14h10" stroke="#777" stroke-width="1.2"/></svg><svg class="r" style="left:232px;top:222px" width="7" height="4" viewBox="0 0 7 4"><path d="M0 0h7l-3.5 4z" fill="#222"/></svg><svg class="r" style="left:251px;top:216px" width="17" height="16" viewBox="0 0 17 16"><path d="M0 2.5h17l-5 5.5H5z" fill="#777"/><path d="M3 0h11v3H3z" fill="#2d86c9"/><path d="M5 8h7l-2.5 4v3h-2v-3z" fill="#777"/><rect x="7.5" y="12" width="2" height="3.5" fill="#2d86c9"/></svg><svg class="r" style="left:272px;top:222px" width="7" height="4" viewBox="0 0 7 4"><path d="M0 0h7l-3.5 4z" fill="#222"/></svg><div class="r" style="left:12px;top:240px;width:336px;height:17px;background:#fff;border:1px solid #c9c9cc;box-sizing:border-box"></div><div class="t" style="left:15px;top:244.90px;font-size:11.7px;color:#9a9a9a;font-weight:normal;">Type filter text</div><svg class="r" style="left:359px;top:242px" width="14" height="14" viewBox="0 0 14 14"><path d="M12 7a5 5 0 1 1-2-4" fill="none" stroke="#2d86c9" stroke-width="1.6"/><path d="M8 1.5h4.5V6" fill="none" stroke="#2d86c9" stroke-width="1.5"/></svg><div class="r" style="left:12px;top:264px;width:365px;height:775px;background:#fff;border:1px solid #cdcdd0;box-sizing:border-box"></div><div class="r" style="left:13px;top:463px;width:363px;height:18px;background:#c3e0f8"></div><svg class="r" style="left:18px;top:271.0px" width="10" height="6" viewBox="0 0 10 6"><path d="M1 1l4 4 4-4" fill="none" stroke="#333" stroke-width="1.3"/></svg><svg class="r" style="left:33px;top:267px" width="17" height="14" viewBox="0 0 17 14"><path d="M0.3 6.3L5 1.5L9.4 0.9L16 6.6L10 12.8L5.5 12.4z" fill="#3a8fd6"/><path d="M9.4 0.9L5.5 6.2L10 12.8 M0.3 6.3H5.5" fill="none" stroke="#fff" stroke-width="1.1"/></svg><div class="t" style="left:55px;top:267.70px;font-size:11.7px;color:#000000;font-weight:normal;">junction_system_with_reaction_3way_valves.mph</div><svg class="r" style="left:39px;top:287.0px" width="6" height="10" viewBox="0 0 6 10"><path d="M1 1l4 4-4 4" fill="none" stroke="#444" stroke-width="1.2"/></svg><svg class="r" style="left:53px;top:284px" width="16" height="16" viewBox="0 0 16 16"><circle cx="8" cy="8" r="7" fill="none" stroke="#2d86c9" stroke-width="1.1"/><ellipse cx="8" cy="8" rx="3" ry="7" fill="none" stroke="#2d86c9" stroke-width="1"/><path d="M1 8h14 M2 4.5h12 M2 11.5h12 M8 1v14" stroke="#2d86c9" stroke-width="0.9"/></svg><div class="t" style="left:75px;top:285.70px;font-size:11.7px;color:#000000;font-weight:normal;">Global Definitions</div><svg class="r" style="left:38px;top:307.0px" width="10" height="6" viewBox="0 0 10 6"><path d="M1 1l4 4 4-4" fill="none" stroke="#333" stroke-width="1.3"/></svg><svg class="r" style="left:53px;top:302px" width="16" height="16" viewBox="0 0 16 16"><path d="M2 3C5 0 13 0 15 4c1 4 0 7-2 10-2 3-5 2-6-1C5 11 1 10 1 7c0-2 0-3 1-4z" fill="#2d86c9"/><path d="M5.5 8.8h1.8v-1c-1.2-.6-1.6-1.8-1.3-2.9.4-1.3 1.5-1.9 2.5-1.9s2.1.6 2.5 1.9c.3 1.1-.1 2.3-1.3 2.9v1h1.8" fill="none" stroke="#fff" stroke-width="0.9"/></svg><div class="t" style="left:75px;top:303.70px;font-size:11.7px;color:#000000;font-weight:normal;">Component 1</div><svg class="r" style="left:59px;top:323.0px" width="6" height="10" viewBox="0 0 6 10"><path d="M1 1l4 4-4 4" fill="none" stroke="#444" stroke-width="1.2"/></svg><svg class="r" style="left:75px;top:323px" width="12" height="10" viewBox="0 0 12 10"><rect x="0" y="0" width="12" height="2" fill="#2d86c9"/><rect x="0" y="4" width="12" height="2" fill="#2d86c9"/><rect x="0" y="8" width="12" height="2" fill="#2d86c9"/></svg><div class="t" style="left:95px;top:321.70px;font-size:11.7px;color:#000000;font-weight:normal;">Definitions</div><svg class="r" style="left:59px;top:341.0px" width="6" height="10" viewBox="0 0 6 10"><path d="M1 1l4 4-4 4" fill="none" stroke="#444" stroke-width="1.2"/></svg><svg class="r" style="left:73px;top:338px" width="16" height="16" viewBox="0 0 16 16"><rect x="0.5" y="0.5" width="15" height="15" fill="none" stroke="#4caf50" stroke-width="1"/><path d="M2 14l6-12 6 12 M2 3c3 4 9 6 12 5" fill="none" stroke="#e05a3a" stroke-width="1.1"/></svg><div class="t" style="left:95px;top:339.70px;font-size:11.7px;color:#000000;font-weight:normal;">Geometry 1</div><svg class="r" style="left:59px;top:359.0px" width="6" height="10" viewBox="0 0 6 10"><path d="M1 1l4 4-4 4" fill="none" stroke="#444" stroke-width="1.2"/></svg><svg class="r" style="left:73px;top:356px" width="15" height="16" viewBox="0 0 15 16"><rect x="5.5" y="1" width="3.6" height="3.6" fill="#f0a030"/><rect x="1" y="5.5" width="3.6" height="3.6" fill="#f0a030"/><rect x="5.5" y="5.5" width="3.6" height="3.6" fill="#e89a28"/><rect x="10" y="5.5" width="3.6" height="3.6" fill="#f0a030"/><rect x="1" y="10" width="3.6" height="3.6" fill="#e8942a"/><rect x="5.5" y="10" width="3.6" height="3.6" fill="#d67a1c"/><rect x="10" y="10" width="3.6" height="3.6" fill="#e8942a"/><rect x="5.5" y="14" width="3.6" height="3.6" fill="#c96c18"/></svg><div class="t" style="left:95px;top:357.70px;font-size:11.7px;color:#000000;font-weight:normal;">Materials</div><svg class="r" style="left:59px;top:377.0px" width="6" height="10" viewBox="0 0 6 10"><path d="M1 1l4 4-4 4" fill="none" stroke="#444" stroke-width="1.2"/></svg><svg class="r" style="left:73px;top:374px" width="18" height="17" viewBox="0 0 18 17"><g transform="translate(-1.5,-1) scale(0.56)"><path d="M4 6.3C13 6.3 21 10 28 14.8L27.5 30.5C20 25 12 20.5 4 20.5z" fill="#b3cbe9"/><path d="M4 6.3C13 6.3 21 10 28 14.8 M4 10.5C13 10.5 20 14 26 18.5 M4 15.5C12 15.5 19 19 25 24 M4 20.5C12 20.5 20 25 27.5 30.5" fill="none" stroke="#3a88d0" stroke-width="2"/><ellipse cx="27.3" cy="22.5" rx="3.5" ry="8" transform="rotate(-15 27.3 22.5)" fill="#b3cbe9" stroke="#3a88d0" stroke-width="2"/></g></svg><div class="t" style="left:95px;top:375.70px;font-size:11.7px;color:#000000;font-weight:normal;">Pipe Flow</div><svg class="r" style="left:58px;top:397.0px" width="10" height="6" viewBox="0 0 10 6"><path d="M1 1l4 4 4-4" fill="none" stroke="#333" stroke-width="1.3"/></svg><svg class="r" style="left:73px;top:391px" width="20" height="18" viewBox="0 0 20 18"><g transform="translate(-1.5,0.5) scale(0.56)"><path d="M4 6.3C13 6.3 21 10 28 14.8L27.5 30.5C20 25 12 20.5 4 20.5z" fill="#b3cbe9"/><path d="M4 6.3C13 6.3 21 10 28 14.8 M4 10.5C13 10.5 20 14 26 18.5 M4 15.5C12 15.5 19 19 25 24 M4 20.5C12 20.5 20 25 27.5 30.5" fill="none" stroke="#3a88d0" stroke-width="2"/><ellipse cx="27.3" cy="22.5" rx="3.5" ry="8" transform="rotate(-15 27.3 22.5)" fill="#b3cbe9" stroke="#3a88d0" stroke-width="2"/></g><path d="M16 0c-1 2-2 3-2 4.2a2 2 0 0 0 4 0c0-1.2-1-2.2-2-4.2z" fill="#2d86c9"/></svg><div class="t" style="left:95px;top:393.70px;font-size:11.7px;color:#000000;font-weight:normal;">Transport of Diluted Species in Pipes</div><svg class="r" style="left:93px;top:412px" width="17" height="13" viewBox="0 0 17 13"><rect x="0.7" y="0.8" width="15.6" height="10" rx="3.6" fill="#dcdce0" stroke="#2d86c9" stroke-width="1.2"/><path d="M1 5.8h15" stroke="#2d86c9" stroke-width="1.1"/><rect x="0" y="-1.5" width="8" height="7" fill="#fff"/><text x="0.5" y="4.8" font-size="7.6" font-weight="bold" fill="#111" font-family="Liberation Serif">D</text></svg><div class="t" style="left:115px;top:411.70px;font-size:11.7px;color:#000000;font-weight:normal;">Convection and Diffusion 1</div><svg class="r" style="left:93px;top:430px" width="17" height="13" viewBox="0 0 17 13"><rect x="0.7" y="0.8" width="15.6" height="10" rx="3.6" fill="#dcdce0" stroke="#2d86c9" stroke-width="1.2"/><path d="M1 5.8h15" stroke="#2d86c9" stroke-width="1.1"/><rect x="0" y="-1.5" width="8" height="7" fill="#fff"/><text x="0.5" y="4.8" font-size="7.6" font-weight="bold" fill="#111" font-family="Liberation Serif">D</text></svg><div class="t" style="left:115px;top:429.70px;font-size:11.7px;color:#000000;font-weight:normal;">Pipe Properties 1</div><svg class="r" style="left:93px;top:448px" width="17" height="13" viewBox="0 0 17 13"><rect x="0.7" y="0.8" width="15.6" height="10" rx="3.6" fill="#dcdce0" stroke="#c8c8cc" stroke-width="1.2"/><path d="M1 5.8h15" stroke="#2d86c9" stroke-width="1.1"/><circle cx="4" cy="10.8" r="1.15" fill="#2d86c9"/><circle cx="12.5" cy="10.8" r="1.15" fill="#2d86c9"/><circle cx="12.5" cy="0.8" r="1.15" fill="#2d86c9"/><circle cx="16.3" cy="5.8" r="1.15" fill="#2d86c9"/><rect x="0" y="-1.5" width="8" height="7" fill="#fff"/><text x="0.5" y="4.8" font-size="7.6" font-weight="bold" fill="#111" font-family="Liberation Serif">D</text></svg><div class="t" style="left:115px;top:447.70px;font-size:11.7px;color:#000000;font-weight:normal;">Concentration 1</div><svg class="r" style="left:93px;top:466px" width="17" height="13" viewBox="0 0 17 13"><rect x="0.7" y="0.8" width="15.6" height="10" rx="3.6" fill="#dcdce0" stroke="#c8c8cc" stroke-width="1.2"/><path d="M1 5.8h15" stroke="#2d86c9" stroke-width="1.1"/><circle cx="4" cy="10.8" r="1.15" fill="#2d86c9"/><circle cx="12.5" cy="10.8" r="1.15" fill="#2d86c9"/><circle cx="12.5" cy="0.8" r="1.15" fill="#2d86c9"/><circle cx="16.3" cy="5.8" r="1.15" fill="#2d86c9"/><rect x="0" y="-1.5" width="8" height="7" fill="#fff"/><text x="0.5" y="4.8" font-size="7.6" font-weight="bold" fill="#111" font-family="Liberation Serif">D</text></svg><div class="t" style="left:115px;top:465.70px;font-size:11.7px;color:#000000;font-weight:normal;">Junction 1</div><svg class="r" style="left:93px;top:484px" width="17" height="13" viewBox="0 0 17 13"><rect x="0.7" y="0.8" width="15.6" height="10" rx="3.6" fill="#dcdce0" stroke="#2d86c9" stroke-width="1.2"/><path d="M1 5.8h15" stroke="#2d86c9" stroke-width="1.1"/><rect x="0" y="-1.5" width="8" height="7" fill="#fff"/><text x="0.5" y="4.8" font-size="7.6" font-weight="bold" fill="#111" font-family="Liberation Serif">D</text></svg><div class="t" style="left:115px;top:483.70px;font-size:11.7px;color:#000000;font-weight:normal;">Initial Values 1</div><svg class="r" style="left:93px;top:502px" width="17" height="13" viewBox="0 0 17 13"><rect x="0.7" y="0.8" width="15.6" height="10" rx="3.6" fill="#dcdce0" stroke="#2d86c9" stroke-width="1.2"/><path d="M1 5.8h15" stroke="#2d86c9" stroke-width="1.1"/></svg><div class="t" style="left:115px;top:501.70px;font-size:11.7px;color:#000000;font-weight:normal;">Pipe Properties 2</div><svg class="r" style="left:93px;top:520px" width="17" height="13" viewBox="0 0 17 13"><rect x="0.7" y="0.8" width="15.6" height="10" rx="3.6" fill="#dcdce0" stroke="#c8c8cc" stroke-width="1.2"/><path d="M1 5.8h15" stroke="#2d86c9" stroke-width="1.1"/><circle cx="4" cy="10.8" r="1.15" fill="#2d86c9"/><circle cx="12.5" cy="10.8" r="1.15" fill="#2d86c9"/><circle cx="12.5" cy="0.8" r="1.15" fill="#2d86c9"/><circle cx="16.3" cy="5.8" r="1.15" fill="#2d86c9"/><circle cx="0.7" cy="5.8" r="1.15" fill="#2d86c9"/><circle cx="4" cy="0.8" r="1.15" fill="#2d86c9"/></svg><div class="t" style="left:115px;top:519.70px;font-size:11.7px;color:#000000;font-weight:normal;">Mass Outflow 1</div><svg class="r" style="left:93px;top:538px" width="17" height="13" viewBox="0 0 17 13"><rect x="0.7" y="0.8" width="15.6" height="10" rx="3.6" fill="#dcdce0" stroke="#2d86c9" stroke-width="1.2"/><path d="M1 5.8h15" stroke="#2d86c9" stroke-width="1.1"/></svg><div class="t" style="left:115px;top:537.70px;font-size:11.7px;color:#000000;font-weight:normal;">Reactions 1</div><svg class="r" style="left:59px;top:557.0px" width="6" height="10" viewBox="0 0 6 10"><path d="M1 1l4 4-4 4" fill="none" stroke="#444" stroke-width="1.2"/></svg><svg class="r" style="left:73px;top:554px" width="16" height="15" viewBox="0 0 16 15"><path d="M8 1l7.5 13.5H0.5z" fill="#9c9ca0"/><path d="M4.2 7.7h7.6 M2.3 11.1h11.4 M8 1L4.2 14.5 M8 1l3.8 13.5 M4.2 7.7L8 14.5l3.8-6.8" fill="none" stroke="#eee" stroke-width="0.6"/></svg><div class="t" style="left:95px;top:555.70px;font-size:11.7px;color:#000000;font-weight:normal;">Mesh 1</div><svg class="r" style="left:39px;top:575.0px" width="6" height="10" viewBox="0 0 6 10"><path d="M1 1l4 4-4 4" fill="none" stroke="#444" stroke-width="1.2"/></svg><svg class="r" style="left:53px;top:574px" width="17" height="11" viewBox="0 0 17 11"><path d="M0.5 5.5c1.5-2.5 3-2.5 4 0" fill="none" stroke="#1f9bb0" stroke-width="1.2"/><circle cx="7.8" cy="6.5" r="2.9" fill="none" stroke="#1f9bb0" stroke-width="1.2"/><circle cx="13.6" cy="6.5" r="2.9" fill="none" stroke="#1f9bb0" stroke-width="1.2"/><path d="M14.5 3.5c.3-1.5 1-2.3 2-2.6" fill="none" stroke="#1f9bb0" stroke-width="1.1"/></svg><div class="t" style="left:75px;top:573.70px;font-size:11.7px;color:#000000;font-weight:normal;">Study 1</div><svg class="r" style="left:39px;top:593.0px" width="6" height="10" viewBox="0 0 6 10"><path d="M1 1l4 4-4 4" fill="none" stroke="#444" stroke-width="1.2"/></svg><svg class="r" style="left:53px;top:590px" width="16" height="16" viewBox="0 0 16 16"><path d="M0.5 10v3l3 2.5h12v-3" fill="#999"/><rect x="2" y="1" width="11" height="10" fill="#fff" stroke="#777" stroke-width="0.8"/><rect x="4" y="3" width="11" height="10" fill="#fff" stroke="#777" stroke-width="0.8"/><rect x="6" y="5.5" width="7.5" height="6" fill="#b5509f"/></svg><div class="t" style="left:75px;top:591.70px;font-size:11.7px;color:#000000;font-weight:normal;">Results</div><div class="t" style="left:397px;top:190.02px;font-size:21px;color:#3062ad;font-weight:normal;-webkit-text-stroke:0">Settings</div><div class="t" style="left:397px;top:216.44px;font-size:12px;color:#2f6cb5;font-weight:normal;">Junction</div><svg class="r" style="left:787px;top:193px" width="10" height="6" viewBox="0 0 10 6"><path d="M1 1l4 4 4-4" fill="none" stroke="#999" stroke-width="1.1"/></svg><svg class="r" style="left:807px;top:191px" width="10" height="9" viewBox="0 0 10 9"><rect x="0.5" y="0.5" width="9" height="8" fill="none" stroke="#8a8a8a" stroke-width="1"/><rect x="0.5" y="0.5" width="9" height="2" fill="#8a8a8a"/></svg><svg class="r" style="left:825px;top:190px" width="8" height="10" viewBox="0 0 8 10"><path d="M1.5 1h5 M2.5 1v5 M5.5 1v5 M1 6h6 M4 6v4" fill="none" stroke="#8a8a8a" stroke-width="1"/></svg><div class="t" style="left:395px;top:248.81px;font-size:11.8px;color:#000000;font-weight:normal;">Label:</div><div class="r" style="left:436px;top:246px;width:372px;height:18px;background:#fff;border:1px solid #c9c9cc;box-sizing:border-box"></div><div class="t" style="left:439px;top:248.90px;font-size:11.7px;color:#000000;font-weight:normal;">Junction 1</div><div class="r" style="left:816px;top:244px;width:20px;height:22px;background:#ececef;border:1px solid #d0d0d3;border-radius:2px;box-sizing:border-box"></div><svg class="r" style="left:819px;top:248px" width="15" height="14" viewBox="0 0 15 14"><rect x="0.5" y="0.5" width="13" height="12" fill="#fff" stroke="#555" stroke-width="1"/><path d="M0.5 3h13" stroke="#555" stroke-width="1.2"/><path d="M5 6h7 M5 8.5h7" stroke="#1aa37a" stroke-width="1"/><path d="M1 13l3-3 M1 10.5v2.5h2.5" fill="none" stroke="#1aa37a" stroke-width="1.2"/></svg><div class="r" style="left:390px;top:275px;width:451px;height:1px;background:#e2e2e5"></div><div class="r" style="left:390px;top:304px;width:451px;height:1px;background:#e2e2e5"></div><div class="r" style="left:390px;top:333px;width:451px;height:1px;background:#e2e2e5"></div><svg class="r" style="left:397px;top:284.5px" width="7" height="10" viewBox="0 0 7 10"><path d="M1.5 1.5l3.5 3.5-3.5 3.5" fill="none" stroke="#222" stroke-width="1.6"/></svg><div class="t" style="left:416px;top:283.34px;font-size:13.3px;color:#2f5ea6;font-weight:normal;letter-spacing:0.2px">Point Selection</div><svg class="r" style="left:397px;top:313.5px" width="7" height="10" viewBox="0 0 7 10"><path d="M1.5 1.5l3.5 3.5-3.5 3.5" fill="none" stroke="#222" stroke-width="1.6"/></svg><div class="t" style="left:416px;top:312.14px;font-size:13.3px;color:#2f5ea6;font-weight:normal;letter-spacing:0.2px">Override and Contribution</div><svg class="r" style="left:396px;top:345px" width="10" height="7" viewBox="0 0 10 7"><path d="M1.5 1.5l3.5 3.5 3.5-3.5" fill="none" stroke="#2f5ea6" stroke-width="1.6"/></svg><div class="t" style="left:416px;top:340.74px;font-size:13.3px;color:#2f5ea6;font-weight:normal;letter-spacing:0.2px">Equation</div><div class="t" style="left:395.5px;top:371.81px;font-size:11.8px;color:#000000;font-weight:normal;">Show equation assuming:</div><div class="r" style="left:395px;top:390px;width:441px;height:21px;background:linear-gradient(#f1f1f3,#e9e9ec);border:1px solid #cfcfd2;border-radius:2px;box-sizing:border-box"></div><div class="t" style="left:408px;top:395.74px;font-size:11.65px;color:#000000;font-weight:normal;">Study 1, Time Dependent</div><svg class="r" style="left:822px;top:399px" width="8" height="4" viewBox="0 0 8 4"><path d="M0 0h8l-4.0 4z" fill="#222"/></svg><svg class="r" style="left:0;top:0;font-family:&quot;Liberation Sans&quot;,sans-serif" width="1920" height="1080" viewBox="0 0 1920 1080" fill="#1a1a1a"><text x="396.5" y="428.6" font-size="12.6" text-anchor="start">if</text><text x="413.5" y="428.6" font-size="12.6" font-weight="bold" text-anchor="start">n</text><text x="424.5" y="428.6" font-size="12.6" text-anchor="start">·</text><text x="432.3" y="428.6" font-size="12.6" font-weight="bold" text-anchor="start">u</text><path d="M454.8 420.5L446.8 424.6 454.8 428.7" fill="none" stroke="#1a1a1a" stroke-width="1.05"/><text x="458.5" y="428.6" font-size="12.3" text-anchor="start">0</text><text x="543" y="428.6" font-size="12.6" font-style="italic" text-anchor="start">c</text><text x="548" y="432.5" font-size="8.5" font-style="italic" text-anchor="start">i</text><path d="M558 423.5h9.2 M558 427.3h9.2" stroke="#1a1a1a" stroke-width="1.05"/><text x="571" y="428.6" font-size="12.6" font-style="italic" text-anchor="start">c</text><text x="577.5" y="433" font-size="8.8" font-style="italic" text-anchor="start">i,b</text><path d="M543.5 437.8H594" stroke="#333" stroke-width="1.4" stroke-dasharray="1.4 1.55"/><text x="396.5" y="464.1" font-size="12.6" text-anchor="start">if</text><text x="413.5" y="464.1" font-size="12.6" font-weight="bold" text-anchor="start">n</text><text x="424.5" y="464.1" font-size="12.6" text-anchor="start">·</text><text x="432.3" y="464.1" font-size="12.6" font-weight="bold" text-anchor="start">u</text><path d="M446 455.5L454.3 459.4 446 463.3 M446 466.3h8.3" fill="none" stroke="#1a1a1a" stroke-width="1.05"/><text x="458.5" y="464.1" font-size="12.3" text-anchor="start">0</text><path d="M484 460.5h9" stroke="#1a1a1a" stroke-width="1.1"/><text x="498.5" y="464.1" font-size="12.6" font-weight="bold" text-anchor="start">n</text><text x="509.5" y="464.1" font-size="12.6" text-anchor="start">·</text><path d="M522.5 450.5c-4.5 6-4.5 15.5 0 21.5" fill="none" stroke="#1a1a1a" stroke-width="1"/><text x="523.5" y="464.1" font-size="12.6" font-style="italic" text-anchor="start">A</text><text x="532.5" y="464.1" font-size="12.6" text-anchor="start">(</text><text x="537.5" y="464.1" font-size="12.6" font-style="italic" text-anchor="start">D</text><text x="546.5" y="468.2" font-size="8.5" font-style="italic" text-anchor="start">i</text><path d="M553.9 460.3h8.4 M558.1 456v8.6" stroke="#1a1a1a" stroke-width="1.05"/><text x="567.5" y="464.1" font-size="12.6" font-style="italic" text-anchor="start">D</text><text x="577.5" y="468.2" font-size="8.5" text-anchor="start">D,</text><text x="586.5" y="468.2" font-size="8.5" font-style="italic" text-anchor="start">i</text><text x="591" y="464.1" font-size="12.6" text-anchor="start">)</text><text x="596.5" y="464.1" font-size="12.6" text-anchor="start">∇</text><text x="606.5" y="468.5" font-size="8.5" font-style="italic" text-anchor="start">t</text><text x="610.5" y="464.1" font-size="12.6" font-style="italic" text-anchor="start">c</text><text x="616.5" y="468.2" font-size="8.5" font-style="italic" text-anchor="start">i</text><path d="M621 450.5c4.5 6 4.5 15.5 0 21.5" fill="none" stroke="#1a1a1a" stroke-width="1"/><path d="M632 458.6h9.2 M632 462.8h9.2" stroke="#1a1a1a" stroke-width="1.05"/><text x="644.5" y="464.1" font-size="12.3" text-anchor="start">0</text><text x="396.5" y="513.8" font-size="12.6" letter-spacing="0.55" text-anchor="start">Inflow concentration branch</text><text x="571" y="513.8" font-size="12.6" font-style="italic" text-anchor="start">b</text><text x="582.5" y="513.8" font-size="12.6" text-anchor="start">:</text><text x="597" y="513.8" font-size="12.6" font-style="italic" text-anchor="start">c</text><text x="603.5" y="518" font-size="8.8" font-style="italic" text-anchor="start">i,b</text><path d="M621 507.6h9.8 M621 512h9.8" stroke="#1a1a1a" stroke-width="1.05"/><path d="M636 509.8H798" stroke="#1a1a1a" stroke-width="1"/><path d="M649.2 487V485.5H637.7L643.7 493.5L637.7 502H649.7V500.5" fill="none" stroke="#1a1a1a" stroke-width="1.2"/><text x="650.7" y="490.5" font-size="8.5" font-style="italic" text-anchor="start">N</text><text x="650.7" y="505.5" font-size="8.8" font-style="italic" text-anchor="start">k</text><path d="M657.7 501.3h7 M657.7 504h7 M663.2 499l-4 7.5" fill="none" stroke="#1a1a1a" stroke-width="0.9"/><text x="669.2" y="505.5" font-size="8.8" font-style="italic" text-anchor="start">b</text><text x="679.7" y="498" font-size="12.6" text-anchor="start">max(</text><text x="711.2" y="498" font-size="12.6" font-style="italic" text-anchor="start">A</text><text x="720.2" y="501.6" font-size="8.5" font-style="italic" text-anchor="start">k</text><text x="726.7" y="498" font-size="12.6" font-weight="bold" text-anchor="start">u</text><text x="734.7" y="501.6" font-size="8.5" font-style="italic" text-anchor="start">k</text><text x="743.2" y="498" font-size="12.6" text-anchor="start">·</text><text x="751.7" y="498" font-size="12.6" font-weight="bold" text-anchor="start">n</text><text x="759.5" y="498" font-size="12.6" text-anchor="start">,0)</text><text x="776.7" y="498" font-size="12.6" font-style="italic" text-anchor="start">c</text><text x="783.2" y="501.6" font-size="8.8" font-style="italic" text-anchor="start">i,k</text><path d="M659 515.1V513.6H647.5L653.5 521.6L647.5 530.1H659.5V528.6" fill="none" stroke="#1a1a1a" stroke-width="1.2"/><text x="660.5" y="518.6" font-size="8.5" font-style="italic" text-anchor="start">N</text><text x="660.5" y="533.6" font-size="8.8" font-style="italic" text-anchor="start">k</text><path d="M667.5 529.4h7 M667.5 532.1h7 M673 527.1l-4 7.5" fill="none" stroke="#1a1a1a" stroke-width="0.9"/><text x="679" y="533.6" font-size="8.8" font-style="italic" text-anchor="start">b</text><text x="689.5" y="526.1" font-size="12.6" text-anchor="start">max(</text><text x="721" y="526.1" font-size="12.6" font-style="italic" text-anchor="start">A</text><text x="730" y="529.7" font-size="8.5" font-style="italic" text-anchor="start">k</text><text x="736.5" y="526.1" font-size="12.6" font-weight="bold" text-anchor="start">u</text><text x="744.5" y="529.7" font-size="8.5" font-style="italic" text-anchor="start">k</text><text x="753" y="526.1" font-size="12.6" text-anchor="start">·</text><text x="761.5" y="526.1" font-size="12.6" font-weight="bold" text-anchor="start">n</text><text x="769.3" y="526.1" font-size="12.6" text-anchor="start">,0)</text></svg><div class="t" style="left:862.4px;top:189.33px;font-size:12.6px;color:#333;font-weight:normal;">Graphics</div><div class="t" style="left:939px;top:189.00px;font-size:13px;color:#2f6cb5;font-weight:normal;">Velocity and Concentration</div><svg class="r" style="left:1102px;top:189px" width="11" height="11" viewBox="0 0 11 11"><path d="M1 1l9 9 M10 1l-9 9" stroke="#888" stroke-width="1.2"/></svg><div class="r" style="left:934px;top:207px;width:187px;height:2px;background:#2f7fd0"></div><div class="r" style="left:849px;top:210px;width:1064px;height:1px;background:#e3e3e6"></div><svg class="r" style="left:1859px;top:193px" width="10" height="6" viewBox="0 0 10 6"><path d="M1 1l4 4 4-4" fill="none" stroke="#999" stroke-width="1.1"/></svg><svg class="r" style="left:1878px;top:191px" width="10" height="9" viewBox="0 0 10 9"><rect x="0.5" y="0.5" width="9" height="8" fill="none" stroke="#8a8a8a" stroke-width="1"/><rect x="0.5" y="0.5" width="9" height="2" fill="#8a8a8a"/></svg><svg class="r" style="left:1896px;top:190px" width="8" height="10" viewBox="0 0 8 10"><path d="M1.5 1h5 M2.5 1v5 M5.5 1v5 M1 6h6 M4 6v4" fill="none" stroke="#8a8a8a" stroke-width="1"/></svg><div class="t" style="left:861.4px;top:936.30px;font-size:13px;color:#2f6cb5;font-weight:normal;">Messages</div><svg class="r" style="left:929px;top:936px" width="11" height="11" viewBox="0 0 11 11"><path d="M1 1l9 9 M10 1l-9 9" stroke="#888" stroke-width="1.2"/></svg><div class="r" style="left:857px;top:953px;width:91px;height:2px;background:#2f7fd0"></div><div class="t" style="left:968.8px;top:936.63px;font-size:12.6px;color:#333;font-weight:normal;">Progress</div><div class="t" style="left:1047px;top:936.63px;font-size:12.6px;color:#333;font-weight:normal;">Log</div><div class="r" style="left:849px;top:957px;width:1064px;height:1px;background:#e3e3e6"></div><svg class="r" style="left:1859px;top:940px" width="10" height="6" viewBox="0 0 10 6"><path d="M1 1l4 4 4-4" fill="none" stroke="#999" stroke-width="1.1"/></svg><svg class="r" style="left:1878px;top:938px" width="10" height="9" viewBox="0 0 10 9"><rect x="0.5" y="0.5" width="9" height="8" fill="none" stroke="#8a8a8a" stroke-width="1"/><rect x="0.5" y="0.5" width="9" height="2" fill="#8a8a8a"/></svg><svg class="r" style="left:1896px;top:937px" width="8" height="10" viewBox="0 0 8 10"><path d="M1.5 1h5 M2.5 1v5 M5.5 1v5 M1 6h6 M4 6v4" fill="none" stroke="#8a8a8a" stroke-width="1"/></svg><svg class="r" style="left:858px;top:962px" width="12" height="16" viewBox="0 0 12 16"><path d="M2 1l5 9" stroke="#8a6d3b" stroke-width="1.3"/><path d="M4 9l5-1 2 7H6z" fill="#f0a030"/></svg><svg class="r" style="left:878px;top:962px" width="18" height="15" viewBox="0 0 18 15"><rect x="0.5" y="0.5" width="13" height="10" fill="#fff" stroke="#2d86c9" stroke-width="1"/><rect x="4" y="4" width="13" height="10" fill="#fff" stroke="#2d86c9" stroke-width="1.1"/><path d="M4 4l6.5 5 6.5-5" fill="none" stroke="#2d86c9" stroke-width="1"/></svg><div class="r" style="left:853px;top:983px;width:1056px;height:59px;background:#fafbfe;border:1px solid #cdcdd0;box-sizing:border-box"></div><div class="r" style="left:0px;top:1078px;width:1920px;height:2px;background:#f4f4f6"></div><div class="t" style="left:1240.4px;top:1060.34px;font-size:10.7px;color:#222;font-weight:normal;">2.08 GB | 2.61 GB</div><svg class="r" style="left:0;top:0" width="1920" height="1080" viewBox="0 0 1920 1080"><defs><linearGradient id="bgg" x1="0" y1="0" x2="0" y2="1"><stop offset="0" stop-color="#f9fbfe"/><stop offset="1" stop-color="#e3effd"/></linearGradient><linearGradient id="cb1" x1="0" y1="0" x2="0" y2="1"><stop offset="0" stop-color="#6a0a6e"/><stop offset="0.08" stop-color="#900850"/><stop offset="0.15" stop-color="#c80828"/><stop offset="0.2" stop-color="#e81818"/><stop offset="0.25" stop-color="#ff4010"/><stop offset="0.3" stop-color="#ff8000"/><stop offset="0.35" stop-color="#f8b800"/><stop offset="0.4" stop-color="#e0e020"/><stop offset="0.45" stop-color="#b0f040"/><stop offset="0.5" stop-color="#70f070"/><stop offset="0.56" stop-color="#30f0b0"/><stop offset="0.62" stop-color="#20e0f0"/><stop offset="0.69" stop-color="#40b0f8"/><stop offset="0.76" stop-color="#7090f0"/><stop offset="0.83" stop-color="#a090f0"/><stop offset="0.9" stop-color="#c8b8f8"/><stop offset="1" stop-color="#f0ecf8"/></linearGradient><linearGradient id="cb2" x1="0" y1="0" x2="0" y2="1"><stop offset="0" stop-color="#700000"/><stop offset="0.05" stop-color="#a00000"/><stop offset="0.12" stop-color="#d01008"/><stop offset="0.2" stop-color="#e03010"/><stop offset="0.27" stop-color="#e87010"/><stop offset="0.33" stop-color="#e8a800"/><stop offset="0.38" stop-color="#e8d800"/><stop offset="0.43" stop-color="#d0f020"/><stop offset="0.5" stop-color="#90f060"/><stop offset="0.55" stop-color="#60f0a0"/><stop offset="0.62" stop-color="#30e0e0"/><stop offset="0.7" stop-color="#30b0f0"/><stop offset="0.78" stop-color="#3080f0"/><stop offset="0.86" stop-color="#2848e0"/><stop offset="0.93" stop-color="#1c20b0"/><stop offset="1" stop-color="#141470"/></linearGradient><linearGradient id="tB" gradientUnits="userSpaceOnUse" x1="1000" y1="385" x2="1094" y2="492"><stop offset="0" stop-color="#3e0a38"/><stop offset="0.3" stop-color="#52082e"/><stop offset="0.55" stop-color="#8a1a10"/><stop offset="0.75" stop-color="#b05010"/><stop offset="1" stop-color="#8a9a18"/></linearGradient><linearGradient id="tS" gradientUnits="userSpaceOnUse" x1="1688" y1="454" x2="1540" y2="600"><stop offset="0" stop-color="#6a9e22"/><stop offset="0.15" stop-color="#2a9440"/><stop offset="0.35" stop-color="#1a80a0"/><stop offset="0.5" stop-color="#4a60a8"/><stop offset="0.65" stop-color="#706496"/><stop offset="0.85" stop-color="#6e6870"/><stop offset="1" stop-color="#787474"/></linearGradient><linearGradient id="tBd" gradientUnits="userSpaceOnUse" x1="1000" y1="385" x2="1094" y2="492"><stop offset="0" stop-color="#26061f"/><stop offset="0.3" stop-color="#34051c"/><stop offset="0.55" stop-color="#5a0c08"/><stop offset="0.75" stop-color="#7a3408"/><stop offset="1" stop-color="#5a6a0c"/></linearGradient><linearGradient id="tSd" gradientUnits="userSpaceOnUse" x1="1688" y1="454" x2="1540" y2="600"><stop offset="0" stop-color="#3a5e10"/><stop offset="0.15" stop-color="#145a20"/><stop offset="0.35" stop-color="#0c4a66"/><stop offset="0.5" stop-color="#2a3670"/><stop offset="0.65" stop-color="#3e3658"/><stop offset="0.85" stop-color="#302c2e"/><stop offset="1" stop-color="#322e2e"/></linearGradient></defs><rect x="849" y="236" width="1064" height="680" fill="url(#bgg)"/><line x1="1427.8" y1="550.4" x2="1650.6" y2="646.8" stroke="#1a0a0a" stroke-width="1.4" stroke-linecap="round"/><line x1="1650.6" y1="646.8" x2="1347.8" y2="856.7" stroke="#0a0a2a" stroke-width="3" stroke-linecap="round"/><line x1="1347.8" y1="856.7" x2="1122.2" y2="702.2" stroke="#1c0606" stroke-width="2" stroke-linecap="round"/><line x1="1427.8" y1="550.4" x2="1122.2" y2="702.2" stroke="#0a0a2e" stroke-width="2.6" stroke-linecap="round"/><line x1="1122.2" y1="702.2" x2="1043.3" y2="647.8" stroke="#0a2838" stroke-width="2.4" stroke-linecap="round"/><line x1="1146.9" y1="576.4" x2="1253.3" y2="635.4" stroke="#0a2838" stroke-width="2.4" stroke-linecap="round"/><path d="M1483.6 574L1454.4 567.2L1466.7 561.4z" fill="#6a0202"/><path d="M1543.2 597L1525 598.4L1536.7 591.9z" fill="#6a0202"/><path d="M1636 640.5L1602.2 632.3L1614.6 625z" fill="#6a0202"/><path d="M1608.9 675.6L1617 659.3L1635.6 667.4z" fill="#2424a4"/><path d="M1555.6 712.6L1565.9 694.8L1583.7 704z" fill="#2424a4"/><path d="M1496.3 753.3L1508.1 733.3L1527.4 743.7z" fill="#2424a4"/><path d="M1430.4 799.3L1445.2 776.3L1465.2 788.1z" fill="#2424a4"/><path d="M1358.3 848.6L1375.6 824.2L1396 837.4z" fill="#2424a4"/><path d="M1133.3 710L1144.4 728.9L1164.4 718.9z" fill="#640000"/><path d="M1202.2 756.7L1214.4 777.8L1234.4 766.7z" fill="#640000"/><path d="M1276.7 808.9L1293.3 833.3L1313.3 820z" fill="#640000"/><path d="M1043.3 647.8L1053.3 664.4L1071.1 656.7z" fill="#2a9ccc"/><path d="M1082.2 674.4L1092.2 692.2L1111.1 683.3z" fill="#2a9ccc"/><path d="M1123.3 701.1L1150 680L1164.4 688.9z" fill="#15156e"/><path d="M1200 663.3L1214.4 651.1L1225.6 656.7z" fill="#15156e"/><path d="M1306.7 610.4L1278.9 616.9L1293.7 624.3z" fill="#2a2acc"/><path d="M1365.9 581.7L1339.1 587.8L1353 594.1z" fill="#2a2acc"/><path d="M1423.4 552.2L1395.2 559.5L1408.7 565.6z" fill="#2a2acc"/><path d="M1190 600.2L1163.1 593.7L1178.9 587.2z" fill="#2aaee0"/><path d="M1245.6 631.7L1216.9 624.3L1232.6 616.9z" fill="#2aaee0"/><path d="M1118.5 329L1240 372.5" fill="none" stroke="#24061f" stroke-width="12" stroke-linecap="round" stroke-linejoin="round"/><path d="M1118.5 329L1240 372.5" fill="none" stroke="#3e0a3a" stroke-width="7.4" stroke-linecap="round" stroke-linejoin="round"/><path d="M1118.5 329L1240 372.5" transform="translate(1.4,-4.6)" fill="none" stroke="#c030b8" stroke-width="1.0" stroke-linecap="round" opacity="0.9"/><ellipse cx="1239.5" cy="372.5" rx="4.5" ry="6" fill="#1e041a" transform="rotate(-20 1239.5 372.5)"/><path d="M997 383.5C1012 388 1024 394 1033 404C1042 414 1050 432 1058 447C1066 461 1080 477 1095.5 493.5" fill="none" stroke="url(#tBd)" stroke-width="12" stroke-linecap="round"/><path d="M997 383.5C1012 388 1024 394 1033 404C1042 414 1050 432 1058 447C1066 461 1080 477 1095.5 493.5" fill="none" stroke="url(#tB)" stroke-width="7" stroke-linecap="round"/><ellipse cx="1094.5" cy="492.5" rx="4.5" ry="6" fill="#7a8a10" transform="rotate(-45 1094.5 492.5)"/><path d="M1244.5 445.5L1438 374.5" fill="none" stroke="#2c4608" stroke-width="11" stroke-linecap="butt" stroke-linejoin="round"/><path d="M1244.5 445.5L1438 374.5" fill="none" stroke="#4e7612" stroke-width="6.8" stroke-linecap="butt" stroke-linejoin="round"/><path d="M1244.5 445.5L1438 374.5" transform="translate(0.6,-0.8)" fill="none" stroke="#d8f850" stroke-width="1.3" stroke-linecap="round" opacity="0.9"/><ellipse cx="1245" cy="445.5" rx="4" ry="5.5" fill="#5aa030" transform="rotate(-20 1245 445.5)"/><path d="M1436.5 375L1683 452" fill="none" stroke="#3e6a10" stroke-width="6" stroke-linecap="round" stroke-linejoin="round"/><path d="M1436.5 375L1683 452" fill="none" stroke="#62a01c" stroke-width="3.7" stroke-linecap="round" stroke-linejoin="round"/><path d="M1436.5 375L1683 452" transform="translate(0,-1)" fill="none" stroke="#90d040" stroke-width="0.8" stroke-linecap="round" opacity="0.9"/><path d="M1103.5 542.5L1246.5 486.5" fill="none" stroke="#1a3052" stroke-width="12" stroke-linecap="butt" stroke-linejoin="round"/><path d="M1103.5 542.5L1246.5 486.5" fill="none" stroke="#2e5282" stroke-width="7.4" stroke-linecap="butt" stroke-linejoin="round"/><path d="M1103.5 542.5L1246.5 486.5" transform="translate(0.8,0.3)" fill="none" stroke="#6cb8ff" stroke-width="1.4" stroke-linecap="round" opacity="0.9"/><ellipse cx="1103.5" cy="542.5" rx="4.5" ry="6" fill="#5a8ad0" transform="rotate(-20 1103.5 542.5)"/><path d="M1105 568.5Q1220 654 1347 725" fill="none" stroke="#564e4e" stroke-width="5.8" stroke-linecap="round" stroke-linejoin="round"/><path d="M1105 568.5Q1220 654 1347 725" fill="none" stroke="#7e7472" stroke-width="3.6" stroke-linecap="round" stroke-linejoin="round"/><path d="M1105 568.5Q1220 654 1347 725" transform="translate(0.3,-0.5)" fill="none" stroke="#c0b4aa" stroke-width="0.8" stroke-linecap="round" opacity="0.9"/><path d="M1686 454C1668 462 1656 476 1645 496C1632 522 1618 548 1590 568C1552 598 1460 650 1347 725" fill="none" stroke="url(#tSd)" stroke-width="12" stroke-linecap="round"/><path d="M1686 454C1668 462 1656 476 1645 496C1632 522 1618 548 1590 568C1552 598 1460 650 1347 725" transform="translate(-1.6,-1.8)" fill="none" stroke="url(#tS)" stroke-width="5.5" stroke-linecap="round"/><path d="M1686 454C1668 462 1656 476 1645 496C1632 522 1618 548 1590 568C1552 598 1460 650 1347 725" transform="translate(1.8,2.2)" fill="none" stroke="url(#tS)" stroke-width="4" stroke-linecap="round" opacity="0.85"/><path d="M1686 454C1668 462 1656 476 1645 496C1632 522 1618 548 1590 568C1552 598 1460 650 1347 725" transform="translate(0.2,0.2)" fill="none" stroke="#f4f4f8" stroke-width="1.2" opacity="0.9"/><path d="M1686 454C1668 462 1656 476 1645 496C1632 522 1618 548 1590 568C1552 598 1460 650 1347 725" transform="translate(-3,-3.6)" fill="none" stroke="#e8e8ee" stroke-width="0.8" opacity="0.7"/><ellipse cx="1349" cy="725" rx="5" ry="6.5" fill="#a49c94" transform="rotate(-30 1349 725)"/><path d="M1246 445L1436.5 375" transform="translate(1.8,-4.6)" fill="none" stroke="#b8d850" stroke-width="1.5" stroke-dasharray="1 1.6" opacity="0.8"/><path d="M1105 542L1246.5 486.5" transform="translate(2,-5)" fill="none" stroke="#7aa0d0" stroke-width="1.5" stroke-dasharray="1 1.6" opacity="0.8"/><path d="M1436.5 375L1683 452" fill="none" stroke="#2e5a0c" stroke-width="2" stroke-dasharray="1 1.5" opacity="0.35"/><path d="M1105 568.5Q1220 654 1347 725" fill="none" stroke="#d8d0b0" stroke-width="1.2" stroke-dasharray="0.8 2" opacity="0.6"/><path d="M893 872V852" stroke="#4a86c4" stroke-width="1.6"/><path d="M889.5 854L893 847.5 896.5 854z" fill="#4a86c4"/><path d="M893 872L877 863" stroke="#4aa84a" stroke-width="1.6"/><path d="M872 860.5L880 860.6 877.5 866.5z" fill="#4aa84a"/><path d="M893 872L909 863" stroke="#e0205a" stroke-width="1.6"/><path d="M914 860.5L906 860.6 908.5 866.5z" fill="#e0205a"/><rect x="1755.5" y="305.5" width="15" height="573" fill="url(#cb1)" stroke="#777" stroke-width="1"/><rect x="1841.5" y="305.5" width="15" height="573" fill="url(#cb2)" stroke="#777" stroke-width="1"/><path d="M1756 336.3h3 M1770 336.3h-3" stroke="#222" stroke-width="1"/><path d="M1756 410.0h3 M1770 410.0h-3" stroke="#222" stroke-width="1"/><path d="M1756 483.7h3 M1770 483.7h-3" stroke="#222" stroke-width="1"/><path d="M1756 557.4h3 M1770 557.4h-3" stroke="#222" stroke-width="1"/><path d="M1756 631.1h3 M1770 631.1h-3" stroke="#222" stroke-width="1"/><path d="M1756 704.8h3 M1770 704.8h-3" stroke="#222" stroke-width="1"/><path d="M1756 778.5h3 M1770 778.5h-3" stroke="#222" stroke-width="1"/><path d="M1756 852.2h3 M1770 852.2h-3" stroke="#222" stroke-width="1"/><path d="M1842 341.3h3 M1856 341.3h-3" stroke="#222" stroke-width="1"/><path d="M1842 433.4h3 M1856 433.4h-3" stroke="#222" stroke-width="1"/><path d="M1842 525.5h3 M1856 525.5h-3" stroke="#222" stroke-width="1"/><path d="M1842 617.6h3 M1856 617.6h-3" stroke="#222" stroke-width="1"/><path d="M1842 709.7h3 M1856 709.7h-3" stroke="#222" stroke-width="1"/><path d="M1842 801.8h3 M1856 801.8h-3" stroke="#222" stroke-width="1"/></svg><div class="t" style="left:866.2px;top:251.13px;font-size:12.6px;color:#111;font-weight:normal;letter-spacing:0.8px;-webkit-text-stroke:0.1px currentColor">Time=50.197 s</div><div class="t" style="left:1235px;top:251.13px;font-size:12.6px;color:#111;font-weight:normal;letter-spacing:0.32px;-webkit-text-stroke:0.1px currentColor">Line: Molar flow rate (mol/s)&nbsp;&nbsp;Arrow Line: Velocity</div><div class="t" style="left:1779.5px;top:330.89px;font-size:12.3px;color:#111;font-weight:normal;">9</div><div class="t" style="left:1779.5px;top:404.59px;font-size:12.3px;color:#111;font-weight:normal;">8</div><div class="t" style="left:1779.5px;top:478.29px;font-size:12.3px;color:#111;font-weight:normal;">7</div><div class="t" style="left:1779.5px;top:551.99px;font-size:12.3px;color:#111;font-weight:normal;">6</div><div class="t" style="left:1779.5px;top:625.69px;font-size:12.3px;color:#111;font-weight:normal;">5</div><div class="t" style="left:1779.5px;top:699.39px;font-size:12.3px;color:#111;font-weight:normal;">4</div><div class="t" style="left:1779.5px;top:773.09px;font-size:12.3px;color:#111;font-weight:normal;">3</div><div class="t" style="left:1779.5px;top:846.79px;font-size:12.3px;color:#111;font-weight:normal;">2</div><div class="t" style="left:1865.5px;top:335.59px;font-size:12.3px;color:#111;font-weight:normal;">7</div><div class="t" style="left:1865.5px;top:427.69px;font-size:12.3px;color:#111;font-weight:normal;">6</div><div class="t" style="left:1865.5px;top:519.79px;font-size:12.3px;color:#111;font-weight:normal;">5</div><div class="t" style="left:1865.5px;top:611.89px;font-size:12.3px;color:#111;font-weight:normal;">4</div><div class="t" style="left:1865.5px;top:703.99px;font-size:12.3px;color:#111;font-weight:normal;">3</div><div class="t" style="left:1865.5px;top:796.09px;font-size:12.3px;color:#111;font-weight:normal;">2</div><div class="t" style="left:1771px;top:284.72px;font-size:12.5px;color:#111;font-weight:normal;">×10<span style="font-size:9px;vertical-align:6px">-4</span></div><div class="t" style="left:393px;width:1000px;text-align:center;top:833.44px;font-size:12px;color:#111;font-weight:normal;">z</div><div class="t" style="left:863.6px;top:849.54px;font-size:12px;color:#111;font-weight:normal;">y</div><div class="t" style="left:917.5px;top:850.34px;font-size:12px;color:#111;font-weight:normal;">x</div><svg class="r" style="left:1889px;top:243px" width="19" height="15" viewBox="0 0 19 15"><path d="M1 3l15-2 2 12-15 2z" fill="#e4e4ea"/><rect x="2.5" y="2" width="13" height="10" rx="2" fill="#1b3fa0"/><rect x="4" y="3.5" width="6" height="7" fill="#f0e040"/><rect x="9" y="3.5" width="5.5" height="7" fill="#3a90e0"/></svg><svg class="r" style="left:857px;top:216px" width="15" height="15" viewBox="0 0 15 15"><circle cx="6" cy="6" r="5" fill="none" stroke="#2d86c9" stroke-width="1.3"/><path d="M9.5 9.5l4 4" stroke="#2d86c9" stroke-width="2"/><path d="M3.5 6h5 M6 3.5v5" stroke="#2d86c9" stroke-width="1.2"/></svg><svg class="r" style="left:880px;top:216px" width="15" height="15" viewBox="0 0 15 15"><circle cx="6" cy="6" r="5" fill="none" stroke="#2d86c9" stroke-width="1.3"/><path d="M9.5 9.5l4 4" stroke="#2d86c9" stroke-width="2"/><path d="M3.5 6h5" stroke="#2d86c9" stroke-width="1.2"/></svg><svg class="r" style="left:902px;top:216px" width="15" height="15" viewBox="0 0 15 15"><circle cx="6" cy="6" r="5" fill="none" stroke="#2d86c9" stroke-width="1.3"/><path d="M9.5 9.5l4 4" stroke="#2d86c9" stroke-width="2"/><rect x="0.5" y="0.5" width="8" height="8" fill="none" stroke="#2d86c9" stroke-width="0.8" stroke-dasharray="1.5 1"/><path d="M4 6h4 M6 4v4" stroke="#2d86c9" stroke-width="1"/></svg><svg class="r" style="left:924px;top:222px" width="7" height="4" viewBox="0 0 7 4"><path d="M0 0h7l-3.5 4z" fill="#222"/></svg><svg class="r" style="left:942px;top:215px" width="17" height="16" viewBox="0 0 17 16"><rect x="0.5" y="0.5" width="15" height="15" fill="none" stroke="#555" stroke-width="1"/><path d="M8 3v10 M3 8h10" stroke="#2d86c9" stroke-width="1.2"/><path d="M6 5l2-2 2 2 M6 11l2 2 2-2 M5 6L3 8l2 2 M11 6l2 2-2 2" fill="none" stroke="#2d86c9" stroke-width="1"/></svg><div class="r" style="left:966px;top:215px;width:1px;height:17px;background:#d0d0d3"></div><svg class="r" style="left:972px;top:216px" width="19" height="15" viewBox="0 0 19 15"><path d="M9 12V2 M7 4l2-2 2 2" fill="none" stroke="#3a8fd0" stroke-width="1.3"/><path d="M9 12L2 8 M9 12l8-4" stroke-width="1.3" fill="none" stroke="#e0205a"/><path d="M9 12L2 8" stroke="#4aa84a" stroke-width="1.3"/></svg><svg class="r" style="left:996px;top:222px" width="7" height="4" viewBox="0 0 7 4"><path d="M0 0h7l-3.5 4z" fill="#222"/></svg><svg class="r" style="left:1015px;top:215px" width="17" height="16" viewBox="0 0 17 16"><path d="M1.5 1v13.5" stroke="#4aa84a" stroke-width="1.2"/><path d="M1.5 14.5h14" stroke="#e0205a" stroke-width="1.2"/><path d="M13 12.5l2.5 2-2.5 2" fill="none" stroke="#e0205a" stroke-width="1"/><text x="4" y="9" font-size="8.5" fill="#777" font-family="Liberation Sans">xy</text></svg><svg class="r" style="left:1038px;top:215px" width="17" height="16" viewBox="0 0 17 16"><path d="M1.5 1v13.5" stroke="#4aa84a" stroke-width="1.2"/><path d="M1.5 14.5h14" stroke="#4aa84a" stroke-width="1.2"/><path d="M13 12.5l2.5 2-2.5 2" fill="none" stroke="#4aa84a" stroke-width="1"/><text x="4" y="9" font-size="8.5" fill="#777" font-family="Liberation Sans">yz</text></svg><svg class="r" style="left:1061px;top:215px" width="17" height="16" viewBox="0 0 17 16"><path d="M1.5 1v13.5" stroke="#e0205a" stroke-width="1.2"/><path d="M1.5 14.5h14" stroke="#e0205a" stroke-width="1.2"/><path d="M13 12.5l2.5 2-2.5 2" fill="none" stroke="#e0205a" stroke-width="1"/><text x="4" y="9" font-size="8.5" fill="#777" font-family="Liberation Sans">xz</text></svg><div class="r" style="left:1084px;top:215px;width:1px;height:17px;background:#d0d0d3"></div><svg class="r" style="left:1093px;top:216px" width="15" height="15" viewBox="0 0 15 15"><path d="M12.5 7.5a5.5 5.5 0 1 1-2-4.5" fill="none" stroke="#2d86c9" stroke-width="1.5"/><path d="M8.5 0.5l3.5 2.5-3 3" fill="none" stroke="#2d86c9" stroke-width="1.4"/></svg><svg class="r" style="left:1113px;top:222px" width="7" height="4" viewBox="0 0 7 4"><path d="M0 0h7l-3.5 4z" fill="#222"/></svg><div class="r" style="left:1132px;top:215px;width:1px;height:17px;background:#d0d0d3"></div><div class="r" style="left:1138px;top:213px;width:20px;height:19px;background:#c3e0f8;border-radius:2px"></div><svg class="r" style="left:1141px;top:217px" width="15" height="12" viewBox="0 0 15 12"><path d="M1 4h3l5-3.5v11L4 8H1z" fill="#2d86c9"/><path d="M11 3c2 1.5 2 4.5 0 6" fill="none" stroke="#2d86c9" stroke-width="1.3"/></svg><svg class="r" style="left:1163px;top:216px" width="16" height="15" viewBox="0 0 16 15"><path d="M4 1.5h11v9l-3 3H1v-9z" fill="#bcd8f0" stroke="#2d86c9" stroke-width="1.1"/><path d="M1 4.5h11v9 M12 4.5l3-3" fill="none" stroke="#2d86c9" stroke-width="1.1"/></svg><svg class="r" style="left:1186px;top:215px" width="16" height="16" viewBox="0 0 16 16"><rect x="0.5" y="0.5" width="15" height="15" fill="none" stroke="#555" stroke-width="1"/><path d="M2 5.5h12 M2 10.5h12 M5.5 2v12 M10.5 2v12" stroke="#2d86c9" stroke-width="1"/></svg><div class="r" style="left:1207px;top:213px;width:38px;height:19px;background:#c3e0f8;border-radius:2px;border:1px solid #a8d0f0;box-sizing:border-box"></div><svg class="r" style="left:1210px;top:215px" width="18" height="16" viewBox="0 0 18 16"><path d="M9 12V2 M7 4l2-2 2 2" fill="none" stroke="#3a8fd0" stroke-width="1.3"/><path d="M9 12l7-4" stroke-width="1.3" fill="none" stroke="#e0205a"/><path d="M9 12L2 8" stroke="#4aa84a" stroke-width="1.3"/><path d="M0.5 15.5h17 M0.5 1v14.5" stroke="#555" stroke-width="0.8" stroke-dasharray="1 1"/></svg><svg class="r" style="left:1231px;top:222px" width="7" height="4" viewBox="0 0 7 4"><path d="M0 0h7l-3.5 4z" fill="#222"/></svg><div class="r" style="left:1248px;top:213px;width:20px;height:19px;background:#c3e0f8;border-radius:2px;border:1px solid #a8d0f0;box-sizing:border-box"></div><svg class="r" style="left:1250px;top:215px" width="16" height="16" viewBox="0 0 16 16"><rect x="0.5" y="0.5" width="15" height="15" fill="#fff" stroke="#555" stroke-width="1"/><rect x="10" y="2.5" width="3.5" height="11" fill="#e05a20"/><rect x="10" y="2.5" width="3.5" height="4" fill="#d02020"/><rect x="10" y="10" width="3.5" height="3.5" fill="#f0c020"/></svg><div class="r" style="left:1273px;top:215px;width:1px;height:17px;background:#d0d0d3"></div><svg class="r" style="left:1283px;top:215px" width="12" height="15" viewBox="0 0 12 15"><path d="M3 7V4.5a3 3 0 0 1 6 0V7" fill="none" stroke="#2d86c9" stroke-width="1.6"/><rect x="1" y="7" width="10" height="8" rx="1" fill="#2d86c9"/></svg><div class="r" style="left:1304px;top:215px;width:1px;height:17px;background:#d0d0d3"></div><svg class="r" style="left:1312px;top:215px" width="16" height="16" viewBox="0 0 16 16"><path d="M8 1a7 7 0 1 0 0 14c1.5 0 1-2 2-3s3 0 4-2A7 7 0 0 0 8 1z" fill="#e8e8ea" stroke="#777" stroke-width="1.2"/><circle cx="5" cy="5" r="1.4" fill="#e0205a"/><circle cx="9" cy="4" r="1.4" fill="#2d86c9"/><circle cx="4" cy="9" r="1.4" fill="#f0a030"/></svg><svg class="r" style="left:1333px;top:222px" width="7" height="4" viewBox="0 0 7 4"><path d="M0 0h7l-3.5 4z" fill="#222"/></svg><div class="r" style="left:1352px;top:215px;width:1px;height:17px;background:#d0d0d3"></div><svg class="r" style="left:1360px;top:215px" width="16" height="16" viewBox="0 0 16 16"><circle cx="8" cy="8" r="7" fill="#2d86c9"/><circle cx="8" cy="8" r="3" fill="#fff"/><path d="M8 1l2 5 M15 8l-5 2 M8 15l-2-5 M1 8l5-2 M3 3l4 3 M13 3l-3 4 M13 13l-4-3 M3 13l3-4" stroke="#fff" stroke-width="1.2"/></svg><svg class="r" style="left:1382px;top:222px" width="7" height="4" viewBox="0 0 7 4"><path d="M0 0h7l-3.5 4z" fill="#222"/></svg><svg class="r" style="left:1401px;top:216px" width="16" height="14" viewBox="0 0 16 14"><path d="M1 3h4l1.5-2h4L12 3h3v10H1z" fill="#2d86c9"/><circle cx="8" cy="8" r="3" fill="none" stroke="#fff" stroke-width="1.3"/></svg><svg class="r" style="left:1424px;top:215px" width="15" height="17" viewBox="0 0 15 17"><rect x="3" y="0.5" width="9" height="5" fill="none" stroke="#2d86c9" stroke-width="1.2"/><rect x="0.6" y="5" width="13.8" height="7" rx="1.5" fill="none" stroke="#2d86c9" stroke-width="1.2"/><rect x="3" y="10" width="9" height="6" fill="#fff" stroke="#2d86c9" stroke-width="1.2"/></svg></body></html>
